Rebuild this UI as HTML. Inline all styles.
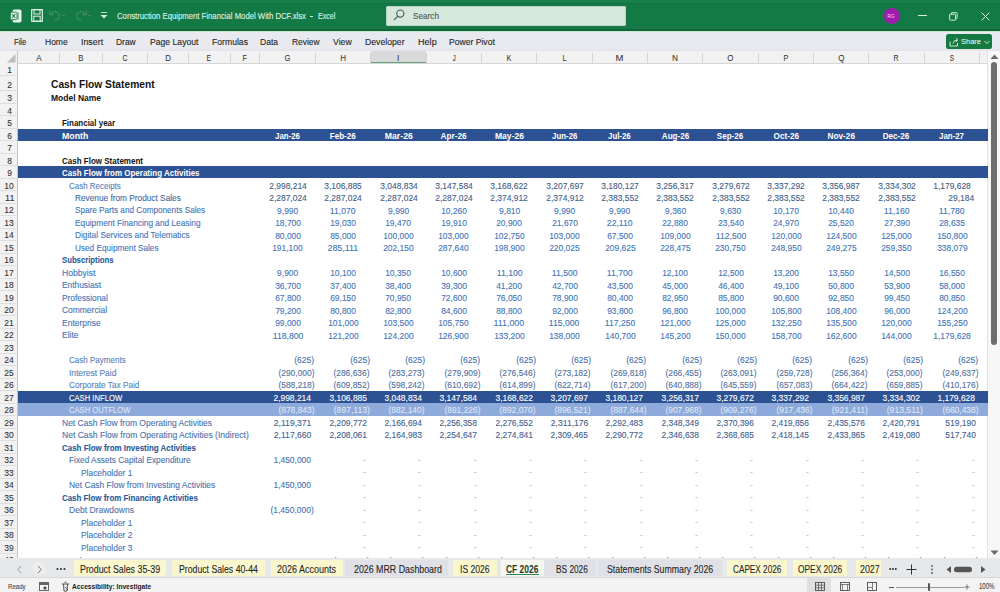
<!DOCTYPE html><html><head><meta charset="utf-8"><title>Cash Flow Statement</title><style>
*{margin:0;padding:0;box-sizing:border-box}
html,body{width:1000px;height:592px;overflow:hidden;background:#fff;font-family:"Liberation Sans", sans-serif}
.a{position:absolute}
.t{position:absolute;white-space:nowrap;line-height:0}
#sheet{position:absolute;left:0;top:0;width:1000px;height:558.3px;overflow:hidden}
</style></head><body>
<div id="sheet">
<div class="a" style="left:0px;top:51.3px;width:987.5px;height:12.1px;background:#f2f2f2;"></div>
<div class="a" style="left:0px;top:62.6px;width:987.5px;height:0.8px;background:#d6d6d6;"></div>
<div class="a" style="left:0px;top:63.4px;width:17.5px;height:494.9px;background:#f2f2f2;"></div>
<div class="a" style="left:16.7px;top:51.3px;width:0.8px;height:507px;background:#c6c6c6;"></div>
<div class="a" style="left:370.7px;top:51.3px;width:55.35px;height:12.1px;background:#d9d9d9;"></div>
<div class="a" style="left:370.7px;top:61.8px;width:55.35px;height:1.6px;background:#63a27a;"></div>
<div class="a" style="left:59px;top:52.8px;width:0.9px;height:10.1px;background:#d4d4d4;"></div>
<div class="t" style="left:35.65px;top:57.94px;font-size:8.56px;color:#333;-webkit-text-stroke:0.05px #333;transform:scaleX(0.9429);transform-origin:center;">A</div>
<div class="a" style="left:101.5px;top:52.8px;width:0.9px;height:10.1px;background:#d4d4d4;"></div>
<div class="t" style="left:77.9px;top:57.94px;font-size:8.56px;color:#333;-webkit-text-stroke:0.05px #333;transform:scaleX(0.8864);transform-origin:center;">B</div>
<div class="a" style="left:146.75px;top:52.8px;width:0.9px;height:10.1px;background:#d4d4d4;"></div>
<div class="t" style="left:121.54px;top:57.94px;font-size:8.56px;color:#333;-webkit-text-stroke:0.05px #333;transform:scaleX(0.8025);transform-origin:center;">C</div>
<div class="a" style="left:187.6px;top:52.8px;width:0.9px;height:10.1px;background:#d4d4d4;"></div>
<div class="t" style="left:164.59px;top:57.94px;font-size:8.56px;color:#333;-webkit-text-stroke:0.05px #333;transform:scaleX(0.9260);transform-origin:center;">D</div>
<div class="a" style="left:229.5px;top:52.8px;width:0.9px;height:10.1px;background:#d4d4d4;"></div>
<div class="t" style="left:206.2px;top:57.94px;font-size:8.56px;color:#333;-webkit-text-stroke:0.05px #333;transform:scaleX(0.7957);transform-origin:center;">E</div>
<div class="a" style="left:259px;top:52.8px;width:0.9px;height:10.1px;background:#d4d4d4;"></div>
<div class="t" style="left:242.14px;top:57.94px;font-size:8.56px;color:#333;-webkit-text-stroke:0.05px #333;transform:scaleX(0.8176);transform-origin:center;">F</div>
<div class="a" style="left:314.85px;top:52.8px;width:0.9px;height:10.1px;background:#d4d4d4;"></div>
<div class="t" style="left:284.35px;top:57.94px;font-size:8.56px;color:#333;-webkit-text-stroke:0.05px #333;transform:scaleX(0.8816);transform-origin:center;">G</div>
<div class="a" style="left:370.2px;top:52.8px;width:0.9px;height:10.1px;background:#d4d4d4;"></div>
<div class="t" style="left:339.94px;top:57.94px;font-size:8.56px;color:#333;-webkit-text-stroke:0.05px #333;transform:scaleX(0.9378);transform-origin:center;">H</div>
<div class="a" style="left:425.55px;top:52.8px;width:0.9px;height:10.1px;background:#d4d4d4;"></div>
<div class="t" style="left:397.19px;top:57.94px;font-size:8.56px;color:#333;-webkit-text-stroke:0.05px #333;transform:scaleX(0.9857);transform-origin:center;">I</div>
<div class="a" style="left:480.9px;top:52.8px;width:0.9px;height:10.1px;background:#d4d4d4;"></div>
<div class="t" style="left:451.59px;top:57.94px;font-size:8.56px;color:#333;-webkit-text-stroke:0.05px #333;transform:scaleX(0.6931);transform-origin:center;">J</div>
<div class="a" style="left:536.25px;top:52.8px;width:0.9px;height:10.1px;background:#d4d4d4;"></div>
<div class="t" style="left:506.22px;top:57.94px;font-size:8.56px;color:#333;-webkit-text-stroke:0.05px #333;transform:scaleX(0.8466);transform-origin:center;">K</div>
<div class="a" style="left:591.6px;top:52.8px;width:0.9px;height:10.1px;background:#d4d4d4;"></div>
<div class="t" style="left:562.05px;top:57.94px;font-size:8.56px;color:#333;-webkit-text-stroke:0.05px #333;transform:scaleX(0.8216);transform-origin:center;">L</div>
<div class="a" style="left:646.95px;top:52.8px;width:0.9px;height:10.1px;background:#d4d4d4;"></div>
<div class="t" style="left:616.21px;top:57.94px;font-size:8.56px;color:#333;-webkit-text-stroke:0.05px #333;transform:scaleX(1.1156);transform-origin:center;">M</div>
<div class="a" style="left:702.3px;top:52.8px;width:0.9px;height:10.1px;background:#d4d4d4;"></div>
<div class="t" style="left:672.04px;top:57.94px;font-size:8.56px;color:#333;-webkit-text-stroke:0.05px #333;transform:scaleX(0.9716);transform-origin:center;">N</div>
<div class="a" style="left:757.65px;top:52.8px;width:0.9px;height:10.1px;background:#d4d4d4;"></div>
<div class="t" style="left:727.15px;top:57.94px;font-size:8.56px;color:#333;-webkit-text-stroke:0.05px #333;transform:scaleX(0.9252);transform-origin:center;">O</div>
<div class="a" style="left:813px;top:52.8px;width:0.9px;height:10.1px;background:#d4d4d4;"></div>
<div class="t" style="left:782.97px;top:57.94px;font-size:8.56px;color:#333;-webkit-text-stroke:0.05px #333;transform:scaleX(0.8419);transform-origin:center;">P</div>
<div class="a" style="left:868.35px;top:52.8px;width:0.9px;height:10.1px;background:#d4d4d4;"></div>
<div class="t" style="left:837.85px;top:57.94px;font-size:8.56px;color:#333;-webkit-text-stroke:0.05px #333;transform:scaleX(0.9403);transform-origin:center;">Q</div>
<div class="a" style="left:923.7px;top:52.8px;width:0.9px;height:10.1px;background:#d4d4d4;"></div>
<div class="t" style="left:893.44px;top:57.94px;font-size:8.56px;color:#333;-webkit-text-stroke:0.05px #333;transform:scaleX(0.8172);transform-origin:center;">R</div>
<div class="a" style="left:979.05px;top:52.8px;width:0.9px;height:10.1px;background:#d4d4d4;"></div>
<div class="t" style="left:949.02px;top:57.94px;font-size:8.56px;color:#333;-webkit-text-stroke:0.05px #333;transform:scaleX(0.7488);transform-origin:center;">S</div>
<div class="a" style="left:987px;top:51.3px;width:0.8px;height:507px;background:#e2e2e2;"></div>
<svg class="a" style="left:6px;top:53.599999999999994px" width="10" height="9"><polygon points="9.5,0 9.5,8.5 1,8.5" fill="#bdbdbd"/></svg>
<div class="a" style="left:0px;top:74.6px;width:16.7px;height:0.8px;background:#dedede;"></div>
<div class="t" style="left:6.77px;top:70.45px;font-size:9.1px;color:#333;-webkit-text-stroke:0.1px #333;transform:scaleX(0.9314);transform-origin:center;">1</div>
<div class="a" style="left:0px;top:90.1px;width:16.7px;height:0.8px;background:#dedede;"></div>
<div class="t" style="left:6.77px;top:84.75px;font-size:9.1px;color:#333;-webkit-text-stroke:0.1px #333;transform:scaleX(0.9314);transform-origin:center;">2</div>
<div class="a" style="left:0px;top:102.9px;width:16.7px;height:0.8px;background:#dedede;"></div>
<div class="t" style="left:6.77px;top:97.75px;font-size:9.1px;color:#333;-webkit-text-stroke:0.1px #333;transform:scaleX(0.9314);transform-origin:center;">3</div>
<div class="a" style="left:0px;top:115.4px;width:16.7px;height:0.8px;background:#dedede;"></div>
<div class="t" style="left:6.77px;top:110.55px;font-size:9.1px;color:#333;-webkit-text-stroke:0.1px #333;transform:scaleX(0.9314);transform-origin:center;">4</div>
<div class="a" style="left:0px;top:127.9px;width:16.7px;height:0.8px;background:#dedede;"></div>
<div class="t" style="left:6.77px;top:123.05px;font-size:9.1px;color:#333;-webkit-text-stroke:0.1px #333;transform:scaleX(0.9314);transform-origin:center;">5</div>
<div class="a" style="left:0px;top:140.39px;width:16.7px;height:0.8px;background:#dedede;"></div>
<div class="t" style="left:6.77px;top:135.55px;font-size:9.1px;color:#333;-webkit-text-stroke:0.1px #333;transform:scaleX(0.9314);transform-origin:center;">6</div>
<div class="a" style="left:0px;top:152.88px;width:16.7px;height:0.8px;background:#dedede;"></div>
<div class="t" style="left:6.77px;top:148.04px;font-size:9.1px;color:#333;-webkit-text-stroke:0.1px #333;transform:scaleX(0.9314);transform-origin:center;">7</div>
<div class="a" style="left:0px;top:165.37px;width:16.7px;height:0.8px;background:#dedede;"></div>
<div class="t" style="left:6.77px;top:160.53px;font-size:9.1px;color:#333;-webkit-text-stroke:0.1px #333;transform:scaleX(0.9314);transform-origin:center;">8</div>
<div class="a" style="left:0px;top:177.86px;width:16.7px;height:0.8px;background:#dedede;"></div>
<div class="t" style="left:6.77px;top:173.02px;font-size:9.1px;color:#333;-webkit-text-stroke:0.1px #333;transform:scaleX(0.9314);transform-origin:center;">9</div>
<div class="a" style="left:0px;top:190.35px;width:16.7px;height:0.8px;background:#dedede;"></div>
<div class="t" style="left:4.24px;top:185.51px;font-size:9.1px;color:#333;-webkit-text-stroke:0.1px #333;transform:scaleX(0.9314);transform-origin:center;">10</div>
<div class="a" style="left:0px;top:202.84px;width:16.7px;height:0.8px;background:#dedede;"></div>
<div class="t" style="left:4.58px;top:198px;font-size:9.1px;color:#333;-webkit-text-stroke:0.1px #333;transform:scaleX(0.9980);transform-origin:center;">11</div>
<div class="a" style="left:0px;top:215.33px;width:16.7px;height:0.8px;background:#dedede;"></div>
<div class="t" style="left:4.24px;top:210.49px;font-size:9.1px;color:#333;-webkit-text-stroke:0.1px #333;transform:scaleX(0.9314);transform-origin:center;">12</div>
<div class="a" style="left:0px;top:227.82px;width:16.7px;height:0.8px;background:#dedede;"></div>
<div class="t" style="left:4.24px;top:222.98px;font-size:9.1px;color:#333;-webkit-text-stroke:0.1px #333;transform:scaleX(0.9314);transform-origin:center;">13</div>
<div class="a" style="left:0px;top:240.31px;width:16.7px;height:0.8px;background:#dedede;"></div>
<div class="t" style="left:4.24px;top:235.47px;font-size:9.1px;color:#333;-webkit-text-stroke:0.1px #333;transform:scaleX(0.9314);transform-origin:center;">14</div>
<div class="a" style="left:0px;top:252.8px;width:16.7px;height:0.8px;background:#dedede;"></div>
<div class="t" style="left:4.24px;top:247.96px;font-size:9.1px;color:#333;-webkit-text-stroke:0.1px #333;transform:scaleX(0.9314);transform-origin:center;">15</div>
<div class="a" style="left:0px;top:265.29px;width:16.7px;height:0.8px;background:#dedede;"></div>
<div class="t" style="left:4.24px;top:260.45px;font-size:9.1px;color:#333;-webkit-text-stroke:0.1px #333;transform:scaleX(0.9314);transform-origin:center;">16</div>
<div class="a" style="left:0px;top:277.78px;width:16.7px;height:0.8px;background:#dedede;"></div>
<div class="t" style="left:4.24px;top:272.94px;font-size:9.1px;color:#333;-webkit-text-stroke:0.1px #333;transform:scaleX(0.9314);transform-origin:center;">17</div>
<div class="a" style="left:0px;top:290.27px;width:16.7px;height:0.8px;background:#dedede;"></div>
<div class="t" style="left:4.24px;top:285.43px;font-size:9.1px;color:#333;-webkit-text-stroke:0.1px #333;transform:scaleX(0.9314);transform-origin:center;">18</div>
<div class="a" style="left:0px;top:302.76px;width:16.7px;height:0.8px;background:#dedede;"></div>
<div class="t" style="left:4.24px;top:297.92px;font-size:9.1px;color:#333;-webkit-text-stroke:0.1px #333;transform:scaleX(0.9314);transform-origin:center;">19</div>
<div class="a" style="left:0px;top:315.25px;width:16.7px;height:0.8px;background:#dedede;"></div>
<div class="t" style="left:4.24px;top:310.41px;font-size:9.1px;color:#333;-webkit-text-stroke:0.1px #333;transform:scaleX(0.9314);transform-origin:center;">20</div>
<div class="a" style="left:0px;top:327.74px;width:16.7px;height:0.8px;background:#dedede;"></div>
<div class="t" style="left:4.24px;top:322.9px;font-size:9.1px;color:#333;-webkit-text-stroke:0.1px #333;transform:scaleX(0.9314);transform-origin:center;">21</div>
<div class="a" style="left:0px;top:340.23px;width:16.7px;height:0.8px;background:#dedede;"></div>
<div class="t" style="left:4.24px;top:335.39px;font-size:9.1px;color:#333;-webkit-text-stroke:0.1px #333;transform:scaleX(0.9314);transform-origin:center;">22</div>
<div class="a" style="left:0px;top:352.72px;width:16.7px;height:0.8px;background:#dedede;"></div>
<div class="t" style="left:4.24px;top:347.88px;font-size:9.1px;color:#333;-webkit-text-stroke:0.1px #333;transform:scaleX(0.9314);transform-origin:center;">23</div>
<div class="a" style="left:0px;top:365.21px;width:16.7px;height:0.8px;background:#dedede;"></div>
<div class="t" style="left:4.24px;top:360.37px;font-size:9.1px;color:#333;-webkit-text-stroke:0.1px #333;transform:scaleX(0.9314);transform-origin:center;">24</div>
<div class="a" style="left:0px;top:377.7px;width:16.7px;height:0.8px;background:#dedede;"></div>
<div class="t" style="left:4.24px;top:372.86px;font-size:9.1px;color:#333;-webkit-text-stroke:0.1px #333;transform:scaleX(0.9314);transform-origin:center;">25</div>
<div class="a" style="left:0px;top:390.19px;width:16.7px;height:0.8px;background:#dedede;"></div>
<div class="t" style="left:4.24px;top:385.35px;font-size:9.1px;color:#333;-webkit-text-stroke:0.1px #333;transform:scaleX(0.9314);transform-origin:center;">26</div>
<div class="a" style="left:0px;top:402.68px;width:16.7px;height:0.8px;background:#dedede;"></div>
<div class="t" style="left:4.24px;top:397.84px;font-size:9.1px;color:#333;-webkit-text-stroke:0.1px #333;transform:scaleX(0.9314);transform-origin:center;">27</div>
<div class="a" style="left:0px;top:415.17px;width:16.7px;height:0.8px;background:#dedede;"></div>
<div class="t" style="left:4.24px;top:410.33px;font-size:9.1px;color:#333;-webkit-text-stroke:0.1px #333;transform:scaleX(0.9314);transform-origin:center;">28</div>
<div class="a" style="left:0px;top:427.66px;width:16.7px;height:0.8px;background:#dedede;"></div>
<div class="t" style="left:4.24px;top:422.82px;font-size:9.1px;color:#333;-webkit-text-stroke:0.1px #333;transform:scaleX(0.9314);transform-origin:center;">29</div>
<div class="a" style="left:0px;top:440.15px;width:16.7px;height:0.8px;background:#dedede;"></div>
<div class="t" style="left:4.24px;top:435.31px;font-size:9.1px;color:#333;-webkit-text-stroke:0.1px #333;transform:scaleX(0.9314);transform-origin:center;">30</div>
<div class="a" style="left:0px;top:452.64px;width:16.7px;height:0.8px;background:#dedede;"></div>
<div class="t" style="left:4.24px;top:447.8px;font-size:9.1px;color:#333;-webkit-text-stroke:0.1px #333;transform:scaleX(0.9314);transform-origin:center;">31</div>
<div class="a" style="left:0px;top:465.13px;width:16.7px;height:0.8px;background:#dedede;"></div>
<div class="t" style="left:4.24px;top:460.29px;font-size:9.1px;color:#333;-webkit-text-stroke:0.1px #333;transform:scaleX(0.9314);transform-origin:center;">32</div>
<div class="a" style="left:0px;top:477.62px;width:16.7px;height:0.8px;background:#dedede;"></div>
<div class="t" style="left:4.24px;top:472.78px;font-size:9.1px;color:#333;-webkit-text-stroke:0.1px #333;transform:scaleX(0.9314);transform-origin:center;">33</div>
<div class="a" style="left:0px;top:490.11px;width:16.7px;height:0.8px;background:#dedede;"></div>
<div class="t" style="left:4.24px;top:485.27px;font-size:9.1px;color:#333;-webkit-text-stroke:0.1px #333;transform:scaleX(0.9314);transform-origin:center;">34</div>
<div class="a" style="left:0px;top:502.6px;width:16.7px;height:0.8px;background:#dedede;"></div>
<div class="t" style="left:4.24px;top:497.76px;font-size:9.1px;color:#333;-webkit-text-stroke:0.1px #333;transform:scaleX(0.9314);transform-origin:center;">35</div>
<div class="a" style="left:0px;top:515.09px;width:16.7px;height:0.8px;background:#dedede;"></div>
<div class="t" style="left:4.24px;top:510.25px;font-size:9.1px;color:#333;-webkit-text-stroke:0.1px #333;transform:scaleX(0.9314);transform-origin:center;">36</div>
<div class="a" style="left:0px;top:527.58px;width:16.7px;height:0.8px;background:#dedede;"></div>
<div class="t" style="left:4.24px;top:522.74px;font-size:9.1px;color:#333;-webkit-text-stroke:0.1px #333;transform:scaleX(0.9314);transform-origin:center;">37</div>
<div class="a" style="left:0px;top:540.07px;width:16.7px;height:0.8px;background:#dedede;"></div>
<div class="t" style="left:4.24px;top:535.23px;font-size:9.1px;color:#333;-webkit-text-stroke:0.1px #333;transform:scaleX(0.9314);transform-origin:center;">38</div>
<div class="a" style="left:0px;top:552.56px;width:16.7px;height:0.8px;background:#dedede;"></div>
<div class="t" style="left:4.24px;top:547.72px;font-size:9.1px;color:#333;-webkit-text-stroke:0.1px #333;transform:scaleX(0.9314);transform-origin:center;">39</div>
<div class="a" style="left:0px;top:565.05px;width:16.7px;height:0.8px;background:#dedede;"></div>
<div class="t" style="left:4.24px;top:560.21px;font-size:9.1px;color:#333;-webkit-text-stroke:0.1px #333;transform:scaleX(0.9314);transform-origin:center;">40</div>
<div class="a" style="left:0px;top:577.54px;width:16.7px;height:0.8px;background:#dedede;"></div>
<div class="t" style="left:4.24px;top:572.7px;font-size:9.1px;color:#333;-webkit-text-stroke:0.1px #333;transform:scaleX(0.9314);transform-origin:center;">41</div>
<div class="a" style="left:17.5px;top:128.5px;width:970px;height:12.49px;background:#2d5294;"></div>
<div class="a" style="left:17.5px;top:165.97px;width:970px;height:12.49px;background:#2d5294;"></div>
<div class="a" style="left:17.5px;top:390.79px;width:970px;height:12.49px;background:#2d5294;"></div>
<div class="a" style="left:17.5px;top:403.28px;width:970px;height:12.49px;background:#8eaadb;"></div>
<div class="t" style="left:51px;top:84.01px;font-size:10.95px;color:#141414;font-weight:bold;transform:scaleX(0.9371);transform-origin:left;">Cash Flow Statement</div>
<div class="t" style="left:51px;top:97.64px;font-size:8.56px;color:#141414;font-weight:bold;transform:scaleX(0.9951);transform-origin:left;">Model Name</div>
<div class="t" style="left:62.4px;top:123.04px;font-size:8.56px;color:#141414;font-weight:bold;transform:scaleX(0.9315);transform-origin:left;">Financial year</div>
<div class="t" style="left:62.4px;top:135.54px;font-size:8.56px;color:#fff;font-weight:bold;transform:scaleX(1.0231);transform-origin:left;">Month</div>
<div class="t" style="left:274.12px;top:135.54px;font-size:8.56px;color:#fff;font-weight:bold;transform:scaleX(0.9198);transform-origin:center;">Jan-26</div>
<div class="t" style="left:329.24px;top:135.54px;font-size:8.56px;color:#fff;font-weight:bold;transform:scaleX(0.9457);transform-origin:center;">Feb-26</div>
<div class="t" style="left:384.58px;top:135.54px;font-size:8.56px;color:#fff;font-weight:bold;transform:scaleX(1.0195);transform-origin:center;">Mar-26</div>
<div class="t" style="left:440.17px;top:135.54px;font-size:8.56px;color:#fff;font-weight:bold;transform:scaleX(0.9603);transform-origin:center;">Apr-26</div>
<div class="t" style="left:494.57px;top:135.54px;font-size:8.56px;color:#fff;font-weight:bold;transform:scaleX(1.0021);transform-origin:center;">May-26</div>
<div class="t" style="left:550.64px;top:135.54px;font-size:8.56px;color:#fff;font-weight:bold;transform:scaleX(0.9187);transform-origin:center;">Jun-26</div>
<div class="t" style="left:607.41px;top:135.54px;font-size:8.56px;color:#fff;font-weight:bold;transform:scaleX(0.9151);transform-origin:center;">Jul-26</div>
<div class="t" style="left:660.63px;top:135.54px;font-size:8.56px;color:#fff;font-weight:bold;transform:scaleX(0.9418);transform-origin:center;">Aug-26</div>
<div class="t" style="left:716.45px;top:135.54px;font-size:8.56px;color:#fff;font-weight:bold;transform:scaleX(0.9389);transform-origin:center;">Sep-26</div>
<div class="t" style="left:772.51px;top:135.54px;font-size:8.56px;color:#fff;font-weight:bold;transform:scaleX(0.9558);transform-origin:center;">Oct-26</div>
<div class="t" style="left:826.91px;top:135.54px;font-size:8.56px;color:#fff;font-weight:bold;transform:scaleX(0.9669);transform-origin:center;">Nov-26</div>
<div class="t" style="left:882.49px;top:135.54px;font-size:8.56px;color:#fff;font-weight:bold;transform:scaleX(0.9518);transform-origin:center;">Dec-26</div>
<div class="t" style="left:938.32px;top:135.54px;font-size:8.56px;color:#fff;font-weight:bold;transform:scaleX(0.9198);transform-origin:center;">Jan-27</div>
<div class="t" style="left:62.4px;top:160.52px;font-size:8.56px;color:#141414;font-weight:bold;transform:scaleX(0.9371);transform-origin:left;">Cash Flow Statement</div>
<div class="t" style="left:62.4px;top:173.01px;font-size:8.56px;color:#fff;font-weight:bold;transform:scaleX(0.9363);transform-origin:left;">Cash Flow from Operating Activities</div>
<div class="t" style="left:68.8px;top:185.5px;font-size:8.56px;color:#5582bd;-webkit-text-stroke:0.1px #5582bd;transform:scaleX(0.9318);transform-origin:left;">Cash Receipts</div>
<div class="t" style="left:268.84px;top:185.7px;font-size:8.56px;color:#3f5b88;-webkit-text-stroke:0.1px #3f5b88;transform:scaleX(0.9888);transform-origin:center;">2,998,214</div>
<div class="t" style="left:324.19px;top:185.7px;font-size:8.56px;color:#3f5b88;-webkit-text-stroke:0.1px #3f5b88;transform:scaleX(0.9888);transform-origin:center;">3,106,885</div>
<div class="t" style="left:379.54px;top:185.7px;font-size:8.56px;color:#3f5b88;-webkit-text-stroke:0.1px #3f5b88;transform:scaleX(0.9888);transform-origin:center;">3,048,834</div>
<div class="t" style="left:434.89px;top:185.7px;font-size:8.56px;color:#3f5b88;-webkit-text-stroke:0.1px #3f5b88;transform:scaleX(0.9888);transform-origin:center;">3,147,584</div>
<div class="t" style="left:490.24px;top:185.7px;font-size:8.56px;color:#3f5b88;-webkit-text-stroke:0.1px #3f5b88;transform:scaleX(0.9888);transform-origin:center;">3,168,622</div>
<div class="t" style="left:545.59px;top:185.7px;font-size:8.56px;color:#3f5b88;-webkit-text-stroke:0.1px #3f5b88;transform:scaleX(0.9888);transform-origin:center;">3,207,697</div>
<div class="t" style="left:600.94px;top:185.7px;font-size:8.56px;color:#3f5b88;-webkit-text-stroke:0.1px #3f5b88;transform:scaleX(0.9888);transform-origin:center;">3,180,127</div>
<div class="t" style="left:656.29px;top:185.7px;font-size:8.56px;color:#3f5b88;-webkit-text-stroke:0.1px #3f5b88;transform:scaleX(0.9888);transform-origin:center;">3,256,317</div>
<div class="t" style="left:711.64px;top:185.7px;font-size:8.56px;color:#3f5b88;-webkit-text-stroke:0.1px #3f5b88;transform:scaleX(0.9888);transform-origin:center;">3,279,672</div>
<div class="t" style="left:766.99px;top:185.7px;font-size:8.56px;color:#3f5b88;-webkit-text-stroke:0.1px #3f5b88;transform:scaleX(0.9888);transform-origin:center;">3,337,292</div>
<div class="t" style="left:822.34px;top:185.7px;font-size:8.56px;color:#3f5b88;-webkit-text-stroke:0.1px #3f5b88;transform:scaleX(0.9888);transform-origin:center;">3,356,987</div>
<div class="t" style="left:877.69px;top:185.7px;font-size:8.56px;color:#3f5b88;-webkit-text-stroke:0.1px #3f5b88;transform:scaleX(0.9888);transform-origin:center;">3,334,302</div>
<div class="t" style="left:933.04px;top:185.7px;font-size:8.56px;color:#3f5b88;-webkit-text-stroke:0.1px #3f5b88;transform:scaleX(0.9888);transform-origin:center;">1,179,628</div>
<div class="t" style="left:74.8px;top:197.99px;font-size:8.56px;color:#3f68a6;-webkit-text-stroke:0.1px #3f68a6;transform:scaleX(0.9684);transform-origin:left;">Revenue from Product Sales</div>
<div class="t" style="left:268.84px;top:198.19px;font-size:8.56px;color:#425d88;-webkit-text-stroke:0.1px #425d88;transform:scaleX(0.9888);transform-origin:center;">2,287,024</div>
<div class="t" style="left:324.19px;top:198.19px;font-size:8.56px;color:#425d88;-webkit-text-stroke:0.1px #425d88;transform:scaleX(0.9888);transform-origin:center;">2,287,024</div>
<div class="t" style="left:379.54px;top:198.19px;font-size:8.56px;color:#425d88;-webkit-text-stroke:0.1px #425d88;transform:scaleX(0.9888);transform-origin:center;">2,287,024</div>
<div class="t" style="left:434.89px;top:198.19px;font-size:8.56px;color:#425d88;-webkit-text-stroke:0.1px #425d88;transform:scaleX(0.9888);transform-origin:center;">2,287,024</div>
<div class="t" style="left:490.24px;top:198.19px;font-size:8.56px;color:#425d88;-webkit-text-stroke:0.1px #425d88;transform:scaleX(0.9888);transform-origin:center;">2,374,912</div>
<div class="t" style="left:545.59px;top:198.19px;font-size:8.56px;color:#425d88;-webkit-text-stroke:0.1px #425d88;transform:scaleX(0.9888);transform-origin:center;">2,374,912</div>
<div class="t" style="left:600.94px;top:198.19px;font-size:8.56px;color:#425d88;-webkit-text-stroke:0.1px #425d88;transform:scaleX(0.9888);transform-origin:center;">2,383,552</div>
<div class="t" style="left:656.29px;top:198.19px;font-size:8.56px;color:#425d88;-webkit-text-stroke:0.1px #425d88;transform:scaleX(0.9888);transform-origin:center;">2,383,552</div>
<div class="t" style="left:711.64px;top:198.19px;font-size:8.56px;color:#425d88;-webkit-text-stroke:0.1px #425d88;transform:scaleX(0.9888);transform-origin:center;">2,383,552</div>
<div class="t" style="left:766.99px;top:198.19px;font-size:8.56px;color:#425d88;-webkit-text-stroke:0.1px #425d88;transform:scaleX(0.9888);transform-origin:center;">2,383,552</div>
<div class="t" style="left:822.34px;top:198.19px;font-size:8.56px;color:#425d88;-webkit-text-stroke:0.1px #425d88;transform:scaleX(0.9888);transform-origin:center;">2,383,552</div>
<div class="t" style="left:877.69px;top:198.19px;font-size:8.56px;color:#425d88;-webkit-text-stroke:0.1px #425d88;transform:scaleX(0.9888);transform-origin:center;">2,383,552</div>
<div class="t" style="left:948.38px;top:197.99px;font-size:8.56px;color:#425d88;-webkit-text-stroke:0.1px #425d88;transform:scaleX(0.9893);transform-origin:right;">29,184</div>
<div class="t" style="left:74.8px;top:210.48px;font-size:8.56px;color:#4274b8;-webkit-text-stroke:0.1px #4274b8;transform:scaleX(0.9548);transform-origin:left;">Spare Parts and Components Sales</div>
<div class="t" style="left:277.17px;top:210.68px;font-size:8.56px;color:#4274b8;-webkit-text-stroke:0.1px #4274b8;transform:scaleX(0.9890);transform-origin:center;">9,990</div>
<div class="t" style="left:330.46px;top:210.68px;font-size:8.56px;color:#4274b8;-webkit-text-stroke:0.1px #4274b8;transform:scaleX(1.0139);transform-origin:center;">11,070</div>
<div class="t" style="left:387.87px;top:210.68px;font-size:8.56px;color:#4274b8;-webkit-text-stroke:0.1px #4274b8;transform:scaleX(0.9890);transform-origin:center;">9,990</div>
<div class="t" style="left:440.84px;top:210.68px;font-size:8.56px;color:#4274b8;-webkit-text-stroke:0.1px #4274b8;transform:scaleX(0.9893);transform-origin:center;">10,260</div>
<div class="t" style="left:498.57px;top:210.68px;font-size:8.56px;color:#4274b8;-webkit-text-stroke:0.1px #4274b8;transform:scaleX(0.9890);transform-origin:center;">9,810</div>
<div class="t" style="left:553.92px;top:210.68px;font-size:8.56px;color:#4274b8;-webkit-text-stroke:0.1px #4274b8;transform:scaleX(0.9890);transform-origin:center;">9,990</div>
<div class="t" style="left:609.27px;top:210.68px;font-size:8.56px;color:#4274b8;-webkit-text-stroke:0.1px #4274b8;transform:scaleX(0.9890);transform-origin:center;">9,990</div>
<div class="t" style="left:664.62px;top:210.68px;font-size:8.56px;color:#4274b8;-webkit-text-stroke:0.1px #4274b8;transform:scaleX(0.9890);transform-origin:center;">9,360</div>
<div class="t" style="left:719.97px;top:210.68px;font-size:8.56px;color:#4274b8;-webkit-text-stroke:0.1px #4274b8;transform:scaleX(0.9890);transform-origin:center;">9,630</div>
<div class="t" style="left:772.94px;top:210.68px;font-size:8.56px;color:#4274b8;-webkit-text-stroke:0.1px #4274b8;transform:scaleX(0.9893);transform-origin:center;">10,170</div>
<div class="t" style="left:828.29px;top:210.68px;font-size:8.56px;color:#4274b8;-webkit-text-stroke:0.1px #4274b8;transform:scaleX(0.9893);transform-origin:center;">10,440</div>
<div class="t" style="left:883.96px;top:210.68px;font-size:8.56px;color:#4274b8;-webkit-text-stroke:0.1px #4274b8;transform:scaleX(1.0139);transform-origin:center;">11,160</div>
<div class="t" style="left:939.31px;top:210.68px;font-size:8.56px;color:#4274b8;-webkit-text-stroke:0.1px #4274b8;transform:scaleX(1.0139);transform-origin:center;">11,780</div>
<div class="t" style="left:74.8px;top:222.97px;font-size:8.56px;color:#4274b8;-webkit-text-stroke:0.1px #4274b8;transform:scaleX(0.9715);transform-origin:left;">Equipment Financing and Leasing</div>
<div class="t" style="left:274.79px;top:223.17px;font-size:8.56px;color:#4274b8;-webkit-text-stroke:0.1px #4274b8;transform:scaleX(0.9893);transform-origin:center;">18,700</div>
<div class="t" style="left:330.14px;top:223.17px;font-size:8.56px;color:#4274b8;-webkit-text-stroke:0.1px #4274b8;transform:scaleX(0.9893);transform-origin:center;">19,030</div>
<div class="t" style="left:385.49px;top:223.17px;font-size:8.56px;color:#4274b8;-webkit-text-stroke:0.1px #4274b8;transform:scaleX(0.9893);transform-origin:center;">19,470</div>
<div class="t" style="left:440.84px;top:223.17px;font-size:8.56px;color:#4274b8;-webkit-text-stroke:0.1px #4274b8;transform:scaleX(0.9893);transform-origin:center;">19,910</div>
<div class="t" style="left:496.19px;top:223.17px;font-size:8.56px;color:#4274b8;-webkit-text-stroke:0.1px #4274b8;transform:scaleX(0.9893);transform-origin:center;">20,900</div>
<div class="t" style="left:551.54px;top:223.17px;font-size:8.56px;color:#4274b8;-webkit-text-stroke:0.1px #4274b8;transform:scaleX(0.9893);transform-origin:center;">21,670</div>
<div class="t" style="left:607.21px;top:223.17px;font-size:8.56px;color:#4274b8;-webkit-text-stroke:0.1px #4274b8;transform:scaleX(1.0139);transform-origin:center;">22,110</div>
<div class="t" style="left:662.24px;top:223.17px;font-size:8.56px;color:#4274b8;-webkit-text-stroke:0.1px #4274b8;transform:scaleX(0.9893);transform-origin:center;">22,880</div>
<div class="t" style="left:717.59px;top:223.17px;font-size:8.56px;color:#4274b8;-webkit-text-stroke:0.1px #4274b8;transform:scaleX(0.9893);transform-origin:center;">23,540</div>
<div class="t" style="left:772.94px;top:223.17px;font-size:8.56px;color:#4274b8;-webkit-text-stroke:0.1px #4274b8;transform:scaleX(0.9893);transform-origin:center;">24,970</div>
<div class="t" style="left:828.29px;top:223.17px;font-size:8.56px;color:#4274b8;-webkit-text-stroke:0.1px #4274b8;transform:scaleX(0.9893);transform-origin:center;">25,520</div>
<div class="t" style="left:883.64px;top:223.17px;font-size:8.56px;color:#4274b8;-webkit-text-stroke:0.1px #4274b8;transform:scaleX(0.9893);transform-origin:center;">27,390</div>
<div class="t" style="left:938.99px;top:223.17px;font-size:8.56px;color:#4274b8;-webkit-text-stroke:0.1px #4274b8;transform:scaleX(0.9893);transform-origin:center;">28,635</div>
<div class="t" style="left:74.8px;top:235.46px;font-size:8.56px;color:#4274b8;-webkit-text-stroke:0.1px #4274b8;transform:scaleX(0.9716);transform-origin:left;">Digital Services and Telematics</div>
<div class="t" style="left:274.79px;top:235.66px;font-size:8.56px;color:#4274b8;-webkit-text-stroke:0.1px #4274b8;transform:scaleX(0.9893);transform-origin:center;">80,000</div>
<div class="t" style="left:330.14px;top:235.66px;font-size:8.56px;color:#4274b8;-webkit-text-stroke:0.1px #4274b8;transform:scaleX(0.9893);transform-origin:center;">85,000</div>
<div class="t" style="left:383.11px;top:235.66px;font-size:8.56px;color:#4274b8;-webkit-text-stroke:0.1px #4274b8;transform:scaleX(0.9895);transform-origin:center;">100,000</div>
<div class="t" style="left:438.46px;top:235.66px;font-size:8.56px;color:#4274b8;-webkit-text-stroke:0.1px #4274b8;transform:scaleX(0.9895);transform-origin:center;">103,000</div>
<div class="t" style="left:493.81px;top:235.66px;font-size:8.56px;color:#4274b8;-webkit-text-stroke:0.1px #4274b8;transform:scaleX(0.9895);transform-origin:center;">102,750</div>
<div class="t" style="left:549.16px;top:235.66px;font-size:8.56px;color:#4274b8;-webkit-text-stroke:0.1px #4274b8;transform:scaleX(0.9895);transform-origin:center;">103,000</div>
<div class="t" style="left:606.89px;top:235.66px;font-size:8.56px;color:#4274b8;-webkit-text-stroke:0.1px #4274b8;transform:scaleX(0.9893);transform-origin:center;">67,500</div>
<div class="t" style="left:659.86px;top:235.66px;font-size:8.56px;color:#4274b8;-webkit-text-stroke:0.1px #4274b8;transform:scaleX(0.9895);transform-origin:center;">109,000</div>
<div class="t" style="left:715.53px;top:235.66px;font-size:8.56px;color:#4274b8;-webkit-text-stroke:0.1px #4274b8;transform:scaleX(1.0102);transform-origin:center;">112,500</div>
<div class="t" style="left:770.56px;top:235.66px;font-size:8.56px;color:#4274b8;-webkit-text-stroke:0.1px #4274b8;transform:scaleX(0.9895);transform-origin:center;">120,000</div>
<div class="t" style="left:825.91px;top:235.66px;font-size:8.56px;color:#4274b8;-webkit-text-stroke:0.1px #4274b8;transform:scaleX(0.9895);transform-origin:center;">124,500</div>
<div class="t" style="left:881.26px;top:235.66px;font-size:8.56px;color:#4274b8;-webkit-text-stroke:0.1px #4274b8;transform:scaleX(0.9895);transform-origin:center;">125,000</div>
<div class="t" style="left:936.61px;top:235.66px;font-size:8.56px;color:#4274b8;-webkit-text-stroke:0.1px #4274b8;transform:scaleX(0.9895);transform-origin:center;">150,800</div>
<div class="t" style="left:74.8px;top:247.95px;font-size:8.56px;color:#4274b8;-webkit-text-stroke:0.1px #4274b8;transform:scaleX(0.9607);transform-origin:left;">Used Equipment Sales</div>
<div class="t" style="left:272.41px;top:248.15px;font-size:8.56px;color:#4274b8;-webkit-text-stroke:0.1px #4274b8;transform:scaleX(0.9895);transform-origin:center;">191,100</div>
<div class="t" style="left:328.4px;top:248.15px;font-size:8.56px;color:#4274b8;-webkit-text-stroke:0.1px #4274b8;transform:scaleX(1.0318);transform-origin:center;">285,111</div>
<div class="t" style="left:383.11px;top:248.15px;font-size:8.56px;color:#4274b8;-webkit-text-stroke:0.1px #4274b8;transform:scaleX(0.9895);transform-origin:center;">202,150</div>
<div class="t" style="left:438.46px;top:248.15px;font-size:8.56px;color:#4274b8;-webkit-text-stroke:0.1px #4274b8;transform:scaleX(0.9895);transform-origin:center;">287,640</div>
<div class="t" style="left:493.81px;top:248.15px;font-size:8.56px;color:#4274b8;-webkit-text-stroke:0.1px #4274b8;transform:scaleX(0.9895);transform-origin:center;">198,900</div>
<div class="t" style="left:549.16px;top:248.15px;font-size:8.56px;color:#4274b8;-webkit-text-stroke:0.1px #4274b8;transform:scaleX(0.9895);transform-origin:center;">220,025</div>
<div class="t" style="left:604.51px;top:248.15px;font-size:8.56px;color:#4274b8;-webkit-text-stroke:0.1px #4274b8;transform:scaleX(0.9895);transform-origin:center;">209,625</div>
<div class="t" style="left:659.86px;top:248.15px;font-size:8.56px;color:#4274b8;-webkit-text-stroke:0.1px #4274b8;transform:scaleX(0.9895);transform-origin:center;">228,475</div>
<div class="t" style="left:715.21px;top:248.15px;font-size:8.56px;color:#4274b8;-webkit-text-stroke:0.1px #4274b8;transform:scaleX(0.9895);transform-origin:center;">230,750</div>
<div class="t" style="left:770.56px;top:248.15px;font-size:8.56px;color:#4274b8;-webkit-text-stroke:0.1px #4274b8;transform:scaleX(0.9895);transform-origin:center;">248,950</div>
<div class="t" style="left:825.91px;top:248.15px;font-size:8.56px;color:#4274b8;-webkit-text-stroke:0.1px #4274b8;transform:scaleX(0.9895);transform-origin:center;">249,275</div>
<div class="t" style="left:881.26px;top:248.15px;font-size:8.56px;color:#4274b8;-webkit-text-stroke:0.1px #4274b8;transform:scaleX(0.9895);transform-origin:center;">259,350</div>
<div class="t" style="left:936.61px;top:248.15px;font-size:8.56px;color:#4274b8;-webkit-text-stroke:0.1px #4274b8;transform:scaleX(0.9895);transform-origin:center;">338,079</div>
<div class="t" style="left:62.4px;top:260.44px;font-size:8.56px;color:#2b5c9a;font-weight:bold;-webkit-text-stroke:0.1px #2b5c9a;transform:scaleX(0.9049);transform-origin:left;">Subscriptions</div>
<div class="t" style="left:62.4px;top:272.93px;font-size:8.56px;color:#4274b8;-webkit-text-stroke:0.1px #4274b8;transform:scaleX(1.0039);transform-origin:left;">Hobbyist</div>
<div class="t" style="left:277.17px;top:273.13px;font-size:8.56px;color:#4274b8;-webkit-text-stroke:0.1px #4274b8;transform:scaleX(0.9890);transform-origin:center;">9,900</div>
<div class="t" style="left:330.14px;top:273.13px;font-size:8.56px;color:#4274b8;-webkit-text-stroke:0.1px #4274b8;transform:scaleX(0.9893);transform-origin:center;">10,100</div>
<div class="t" style="left:385.49px;top:273.13px;font-size:8.56px;color:#4274b8;-webkit-text-stroke:0.1px #4274b8;transform:scaleX(0.9893);transform-origin:center;">10,350</div>
<div class="t" style="left:440.84px;top:273.13px;font-size:8.56px;color:#4274b8;-webkit-text-stroke:0.1px #4274b8;transform:scaleX(0.9893);transform-origin:center;">10,600</div>
<div class="t" style="left:496.51px;top:273.13px;font-size:8.56px;color:#4274b8;-webkit-text-stroke:0.1px #4274b8;transform:scaleX(1.0139);transform-origin:center;">11,100</div>
<div class="t" style="left:551.86px;top:273.13px;font-size:8.56px;color:#4274b8;-webkit-text-stroke:0.1px #4274b8;transform:scaleX(1.0139);transform-origin:center;">11,500</div>
<div class="t" style="left:607.21px;top:273.13px;font-size:8.56px;color:#4274b8;-webkit-text-stroke:0.1px #4274b8;transform:scaleX(1.0139);transform-origin:center;">11,700</div>
<div class="t" style="left:662.24px;top:273.13px;font-size:8.56px;color:#4274b8;-webkit-text-stroke:0.1px #4274b8;transform:scaleX(0.9893);transform-origin:center;">12,100</div>
<div class="t" style="left:717.59px;top:273.13px;font-size:8.56px;color:#4274b8;-webkit-text-stroke:0.1px #4274b8;transform:scaleX(0.9893);transform-origin:center;">12,500</div>
<div class="t" style="left:772.94px;top:273.13px;font-size:8.56px;color:#4274b8;-webkit-text-stroke:0.1px #4274b8;transform:scaleX(0.9893);transform-origin:center;">13,200</div>
<div class="t" style="left:828.29px;top:273.13px;font-size:8.56px;color:#4274b8;-webkit-text-stroke:0.1px #4274b8;transform:scaleX(0.9893);transform-origin:center;">13,550</div>
<div class="t" style="left:883.64px;top:273.13px;font-size:8.56px;color:#4274b8;-webkit-text-stroke:0.1px #4274b8;transform:scaleX(0.9893);transform-origin:center;">14,500</div>
<div class="t" style="left:938.99px;top:273.13px;font-size:8.56px;color:#4274b8;-webkit-text-stroke:0.1px #4274b8;transform:scaleX(0.9893);transform-origin:center;">16,550</div>
<div class="t" style="left:62.4px;top:285.42px;font-size:8.56px;color:#4274b8;-webkit-text-stroke:0.1px #4274b8;transform:scaleX(0.9787);transform-origin:left;">Enthusiast</div>
<div class="t" style="left:274.79px;top:285.62px;font-size:8.56px;color:#4274b8;-webkit-text-stroke:0.1px #4274b8;transform:scaleX(0.9893);transform-origin:center;">36,700</div>
<div class="t" style="left:330.14px;top:285.62px;font-size:8.56px;color:#4274b8;-webkit-text-stroke:0.1px #4274b8;transform:scaleX(0.9893);transform-origin:center;">37,400</div>
<div class="t" style="left:385.49px;top:285.62px;font-size:8.56px;color:#4274b8;-webkit-text-stroke:0.1px #4274b8;transform:scaleX(0.9893);transform-origin:center;">38,400</div>
<div class="t" style="left:440.84px;top:285.62px;font-size:8.56px;color:#4274b8;-webkit-text-stroke:0.1px #4274b8;transform:scaleX(0.9893);transform-origin:center;">39,300</div>
<div class="t" style="left:496.19px;top:285.62px;font-size:8.56px;color:#4274b8;-webkit-text-stroke:0.1px #4274b8;transform:scaleX(0.9893);transform-origin:center;">41,200</div>
<div class="t" style="left:551.54px;top:285.62px;font-size:8.56px;color:#4274b8;-webkit-text-stroke:0.1px #4274b8;transform:scaleX(0.9893);transform-origin:center;">42,700</div>
<div class="t" style="left:606.89px;top:285.62px;font-size:8.56px;color:#4274b8;-webkit-text-stroke:0.1px #4274b8;transform:scaleX(0.9893);transform-origin:center;">43,500</div>
<div class="t" style="left:662.24px;top:285.62px;font-size:8.56px;color:#4274b8;-webkit-text-stroke:0.1px #4274b8;transform:scaleX(0.9893);transform-origin:center;">45,000</div>
<div class="t" style="left:717.59px;top:285.62px;font-size:8.56px;color:#4274b8;-webkit-text-stroke:0.1px #4274b8;transform:scaleX(0.9893);transform-origin:center;">46,400</div>
<div class="t" style="left:772.94px;top:285.62px;font-size:8.56px;color:#4274b8;-webkit-text-stroke:0.1px #4274b8;transform:scaleX(0.9893);transform-origin:center;">49,100</div>
<div class="t" style="left:828.29px;top:285.62px;font-size:8.56px;color:#4274b8;-webkit-text-stroke:0.1px #4274b8;transform:scaleX(0.9893);transform-origin:center;">50,800</div>
<div class="t" style="left:883.64px;top:285.62px;font-size:8.56px;color:#4274b8;-webkit-text-stroke:0.1px #4274b8;transform:scaleX(0.9893);transform-origin:center;">53,900</div>
<div class="t" style="left:938.99px;top:285.62px;font-size:8.56px;color:#4274b8;-webkit-text-stroke:0.1px #4274b8;transform:scaleX(0.9893);transform-origin:center;">58,000</div>
<div class="t" style="left:62.4px;top:297.91px;font-size:8.56px;color:#4274b8;-webkit-text-stroke:0.1px #4274b8;transform:scaleX(0.9732);transform-origin:left;">Professional</div>
<div class="t" style="left:274.79px;top:298.11px;font-size:8.56px;color:#4274b8;-webkit-text-stroke:0.1px #4274b8;transform:scaleX(0.9893);transform-origin:center;">67,800</div>
<div class="t" style="left:330.14px;top:298.11px;font-size:8.56px;color:#4274b8;-webkit-text-stroke:0.1px #4274b8;transform:scaleX(0.9893);transform-origin:center;">69,150</div>
<div class="t" style="left:385.49px;top:298.11px;font-size:8.56px;color:#4274b8;-webkit-text-stroke:0.1px #4274b8;transform:scaleX(0.9893);transform-origin:center;">70,950</div>
<div class="t" style="left:440.84px;top:298.11px;font-size:8.56px;color:#4274b8;-webkit-text-stroke:0.1px #4274b8;transform:scaleX(0.9893);transform-origin:center;">72,600</div>
<div class="t" style="left:496.19px;top:298.11px;font-size:8.56px;color:#4274b8;-webkit-text-stroke:0.1px #4274b8;transform:scaleX(0.9893);transform-origin:center;">76,050</div>
<div class="t" style="left:551.54px;top:298.11px;font-size:8.56px;color:#4274b8;-webkit-text-stroke:0.1px #4274b8;transform:scaleX(0.9893);transform-origin:center;">78,900</div>
<div class="t" style="left:606.89px;top:298.11px;font-size:8.56px;color:#4274b8;-webkit-text-stroke:0.1px #4274b8;transform:scaleX(0.9893);transform-origin:center;">80,400</div>
<div class="t" style="left:662.24px;top:298.11px;font-size:8.56px;color:#4274b8;-webkit-text-stroke:0.1px #4274b8;transform:scaleX(0.9893);transform-origin:center;">82,950</div>
<div class="t" style="left:717.59px;top:298.11px;font-size:8.56px;color:#4274b8;-webkit-text-stroke:0.1px #4274b8;transform:scaleX(0.9893);transform-origin:center;">85,800</div>
<div class="t" style="left:772.94px;top:298.11px;font-size:8.56px;color:#4274b8;-webkit-text-stroke:0.1px #4274b8;transform:scaleX(0.9893);transform-origin:center;">90,600</div>
<div class="t" style="left:828.29px;top:298.11px;font-size:8.56px;color:#4274b8;-webkit-text-stroke:0.1px #4274b8;transform:scaleX(0.9893);transform-origin:center;">92,850</div>
<div class="t" style="left:883.64px;top:298.11px;font-size:8.56px;color:#4274b8;-webkit-text-stroke:0.1px #4274b8;transform:scaleX(0.9893);transform-origin:center;">99,450</div>
<div class="t" style="left:938.99px;top:298.11px;font-size:8.56px;color:#4274b8;-webkit-text-stroke:0.1px #4274b8;transform:scaleX(0.9893);transform-origin:center;">80,850</div>
<div class="t" style="left:62.4px;top:310.4px;font-size:8.56px;color:#4274b8;-webkit-text-stroke:0.1px #4274b8;transform:scaleX(0.9884);transform-origin:left;">Commercial</div>
<div class="t" style="left:274.79px;top:310.6px;font-size:8.56px;color:#4274b8;-webkit-text-stroke:0.1px #4274b8;transform:scaleX(0.9893);transform-origin:center;">79,200</div>
<div class="t" style="left:330.14px;top:310.6px;font-size:8.56px;color:#4274b8;-webkit-text-stroke:0.1px #4274b8;transform:scaleX(0.9893);transform-origin:center;">80,800</div>
<div class="t" style="left:385.49px;top:310.6px;font-size:8.56px;color:#4274b8;-webkit-text-stroke:0.1px #4274b8;transform:scaleX(0.9893);transform-origin:center;">82,800</div>
<div class="t" style="left:440.84px;top:310.6px;font-size:8.56px;color:#4274b8;-webkit-text-stroke:0.1px #4274b8;transform:scaleX(0.9893);transform-origin:center;">84,600</div>
<div class="t" style="left:496.19px;top:310.6px;font-size:8.56px;color:#4274b8;-webkit-text-stroke:0.1px #4274b8;transform:scaleX(0.9893);transform-origin:center;">88,800</div>
<div class="t" style="left:551.54px;top:310.6px;font-size:8.56px;color:#4274b8;-webkit-text-stroke:0.1px #4274b8;transform:scaleX(0.9893);transform-origin:center;">92,000</div>
<div class="t" style="left:606.89px;top:310.6px;font-size:8.56px;color:#4274b8;-webkit-text-stroke:0.1px #4274b8;transform:scaleX(0.9893);transform-origin:center;">93,800</div>
<div class="t" style="left:662.24px;top:310.6px;font-size:8.56px;color:#4274b8;-webkit-text-stroke:0.1px #4274b8;transform:scaleX(0.9893);transform-origin:center;">96,800</div>
<div class="t" style="left:715.21px;top:310.6px;font-size:8.56px;color:#4274b8;-webkit-text-stroke:0.1px #4274b8;transform:scaleX(0.9895);transform-origin:center;">100,000</div>
<div class="t" style="left:770.56px;top:310.6px;font-size:8.56px;color:#4274b8;-webkit-text-stroke:0.1px #4274b8;transform:scaleX(0.9895);transform-origin:center;">105,800</div>
<div class="t" style="left:825.91px;top:310.6px;font-size:8.56px;color:#4274b8;-webkit-text-stroke:0.1px #4274b8;transform:scaleX(0.9895);transform-origin:center;">108,400</div>
<div class="t" style="left:883.64px;top:310.6px;font-size:8.56px;color:#4274b8;-webkit-text-stroke:0.1px #4274b8;transform:scaleX(0.9893);transform-origin:center;">96,000</div>
<div class="t" style="left:936.61px;top:310.6px;font-size:8.56px;color:#4274b8;-webkit-text-stroke:0.1px #4274b8;transform:scaleX(0.9895);transform-origin:center;">124,200</div>
<div class="t" style="left:62.4px;top:322.89px;font-size:8.56px;color:#4274b8;-webkit-text-stroke:0.1px #4274b8;transform:scaleX(0.9938);transform-origin:left;">Enterprise</div>
<div class="t" style="left:274.79px;top:323.09px;font-size:8.56px;color:#4274b8;-webkit-text-stroke:0.1px #4274b8;transform:scaleX(0.9893);transform-origin:center;">99,000</div>
<div class="t" style="left:327.76px;top:323.09px;font-size:8.56px;color:#4274b8;-webkit-text-stroke:0.1px #4274b8;transform:scaleX(0.9895);transform-origin:center;">101,000</div>
<div class="t" style="left:383.11px;top:323.09px;font-size:8.56px;color:#4274b8;-webkit-text-stroke:0.1px #4274b8;transform:scaleX(0.9895);transform-origin:center;">103,500</div>
<div class="t" style="left:438.46px;top:323.09px;font-size:8.56px;color:#4274b8;-webkit-text-stroke:0.1px #4274b8;transform:scaleX(0.9895);transform-origin:center;">105,750</div>
<div class="t" style="left:494.45px;top:323.09px;font-size:8.56px;color:#4274b8;-webkit-text-stroke:0.1px #4274b8;transform:scaleX(1.0318);transform-origin:center;">111,000</div>
<div class="t" style="left:549.48px;top:323.09px;font-size:8.56px;color:#4274b8;-webkit-text-stroke:0.1px #4274b8;transform:scaleX(1.0102);transform-origin:center;">115,000</div>
<div class="t" style="left:604.83px;top:323.09px;font-size:8.56px;color:#4274b8;-webkit-text-stroke:0.1px #4274b8;transform:scaleX(1.0102);transform-origin:center;">117,250</div>
<div class="t" style="left:659.86px;top:323.09px;font-size:8.56px;color:#4274b8;-webkit-text-stroke:0.1px #4274b8;transform:scaleX(0.9895);transform-origin:center;">121,000</div>
<div class="t" style="left:715.21px;top:323.09px;font-size:8.56px;color:#4274b8;-webkit-text-stroke:0.1px #4274b8;transform:scaleX(0.9895);transform-origin:center;">125,000</div>
<div class="t" style="left:770.56px;top:323.09px;font-size:8.56px;color:#4274b8;-webkit-text-stroke:0.1px #4274b8;transform:scaleX(0.9895);transform-origin:center;">132,250</div>
<div class="t" style="left:825.91px;top:323.09px;font-size:8.56px;color:#4274b8;-webkit-text-stroke:0.1px #4274b8;transform:scaleX(0.9895);transform-origin:center;">135,500</div>
<div class="t" style="left:881.26px;top:323.09px;font-size:8.56px;color:#4274b8;-webkit-text-stroke:0.1px #4274b8;transform:scaleX(0.9895);transform-origin:center;">120,000</div>
<div class="t" style="left:936.61px;top:323.09px;font-size:8.56px;color:#4274b8;-webkit-text-stroke:0.1px #4274b8;transform:scaleX(0.9895);transform-origin:center;">155,250</div>
<div class="t" style="left:62.4px;top:335.38px;font-size:8.56px;color:#4274b8;-webkit-text-stroke:0.1px #4274b8;transform:scaleX(0.9885);transform-origin:left;">Elite</div>
<div class="t" style="left:272.73px;top:335.58px;font-size:8.56px;color:#4274b8;-webkit-text-stroke:0.1px #4274b8;transform:scaleX(1.0102);transform-origin:center;">118,800</div>
<div class="t" style="left:327.76px;top:335.58px;font-size:8.56px;color:#4274b8;-webkit-text-stroke:0.1px #4274b8;transform:scaleX(0.9895);transform-origin:center;">121,200</div>
<div class="t" style="left:383.11px;top:335.58px;font-size:8.56px;color:#4274b8;-webkit-text-stroke:0.1px #4274b8;transform:scaleX(0.9895);transform-origin:center;">124,200</div>
<div class="t" style="left:438.46px;top:335.58px;font-size:8.56px;color:#4274b8;-webkit-text-stroke:0.1px #4274b8;transform:scaleX(0.9895);transform-origin:center;">126,900</div>
<div class="t" style="left:493.81px;top:335.58px;font-size:8.56px;color:#4274b8;-webkit-text-stroke:0.1px #4274b8;transform:scaleX(0.9895);transform-origin:center;">133,200</div>
<div class="t" style="left:549.16px;top:335.58px;font-size:8.56px;color:#4274b8;-webkit-text-stroke:0.1px #4274b8;transform:scaleX(0.9895);transform-origin:center;">138,000</div>
<div class="t" style="left:604.51px;top:335.58px;font-size:8.56px;color:#4274b8;-webkit-text-stroke:0.1px #4274b8;transform:scaleX(0.9895);transform-origin:center;">140,700</div>
<div class="t" style="left:659.86px;top:335.58px;font-size:8.56px;color:#4274b8;-webkit-text-stroke:0.1px #4274b8;transform:scaleX(0.9895);transform-origin:center;">145,200</div>
<div class="t" style="left:715.21px;top:335.58px;font-size:8.56px;color:#4274b8;-webkit-text-stroke:0.1px #4274b8;transform:scaleX(0.9895);transform-origin:center;">150,000</div>
<div class="t" style="left:770.56px;top:335.58px;font-size:8.56px;color:#4274b8;-webkit-text-stroke:0.1px #4274b8;transform:scaleX(0.9895);transform-origin:center;">158,700</div>
<div class="t" style="left:825.91px;top:335.58px;font-size:8.56px;color:#4274b8;-webkit-text-stroke:0.1px #4274b8;transform:scaleX(0.9895);transform-origin:center;">162,600</div>
<div class="t" style="left:881.26px;top:335.58px;font-size:8.56px;color:#4274b8;-webkit-text-stroke:0.1px #4274b8;transform:scaleX(0.9895);transform-origin:center;">144,000</div>
<div class="t" style="left:933.04px;top:335.58px;font-size:8.56px;color:#4274b8;-webkit-text-stroke:0.1px #4274b8;transform:scaleX(0.9888);transform-origin:center;">1,179,628</div>
<div class="t" style="left:68.8px;top:360.36px;font-size:8.56px;color:#5582bd;-webkit-text-stroke:0.1px #5582bd;transform:scaleX(0.9396);transform-origin:left;">Cash Payments</div>
<div class="t" style="left:294.18px;top:360.36px;font-size:8.56px;color:#4670b0;-webkit-text-stroke:0.1px #4670b0;transform:scaleX(0.9903);transform-origin:right;">(625)</div>
<div class="t" style="left:349.53px;top:360.36px;font-size:8.56px;color:#4670b0;-webkit-text-stroke:0.1px #4670b0;transform:scaleX(0.9903);transform-origin:right;">(625)</div>
<div class="t" style="left:404.88px;top:360.36px;font-size:8.56px;color:#4670b0;-webkit-text-stroke:0.1px #4670b0;transform:scaleX(0.9903);transform-origin:right;">(625)</div>
<div class="t" style="left:460.23px;top:360.36px;font-size:8.56px;color:#4670b0;-webkit-text-stroke:0.1px #4670b0;transform:scaleX(0.9903);transform-origin:right;">(625)</div>
<div class="t" style="left:515.58px;top:360.36px;font-size:8.56px;color:#4670b0;-webkit-text-stroke:0.1px #4670b0;transform:scaleX(0.9903);transform-origin:right;">(625)</div>
<div class="t" style="left:570.93px;top:360.36px;font-size:8.56px;color:#4670b0;-webkit-text-stroke:0.1px #4670b0;transform:scaleX(0.9903);transform-origin:right;">(625)</div>
<div class="t" style="left:626.28px;top:360.36px;font-size:8.56px;color:#4670b0;-webkit-text-stroke:0.1px #4670b0;transform:scaleX(0.9903);transform-origin:right;">(625)</div>
<div class="t" style="left:681.63px;top:360.36px;font-size:8.56px;color:#4670b0;-webkit-text-stroke:0.1px #4670b0;transform:scaleX(0.9903);transform-origin:right;">(625)</div>
<div class="t" style="left:736.98px;top:360.36px;font-size:8.56px;color:#4670b0;-webkit-text-stroke:0.1px #4670b0;transform:scaleX(0.9903);transform-origin:right;">(625)</div>
<div class="t" style="left:792.33px;top:360.36px;font-size:8.56px;color:#4670b0;-webkit-text-stroke:0.1px #4670b0;transform:scaleX(0.9903);transform-origin:right;">(625)</div>
<div class="t" style="left:847.68px;top:360.36px;font-size:8.56px;color:#4670b0;-webkit-text-stroke:0.1px #4670b0;transform:scaleX(0.9903);transform-origin:right;">(625)</div>
<div class="t" style="left:903.03px;top:360.36px;font-size:8.56px;color:#4670b0;-webkit-text-stroke:0.1px #4670b0;transform:scaleX(0.9903);transform-origin:right;">(625)</div>
<div class="t" style="left:958.38px;top:360.36px;font-size:8.56px;color:#4670b0;-webkit-text-stroke:0.1px #4670b0;transform:scaleX(0.9903);transform-origin:right;">(625)</div>
<div class="t" style="left:68.8px;top:372.85px;font-size:8.56px;color:#5582bd;-webkit-text-stroke:0.1px #5582bd;transform:scaleX(0.9860);transform-origin:left;">Interest Paid</div>
<div class="t" style="left:277.52px;top:372.85px;font-size:8.56px;color:#52709e;-webkit-text-stroke:0.1px #52709e;transform:scaleX(0.9895);transform-origin:right;">(290,000)</div>
<div class="t" style="left:332.87px;top:372.85px;font-size:8.56px;color:#52709e;-webkit-text-stroke:0.1px #52709e;transform:scaleX(0.9895);transform-origin:right;">(286,636)</div>
<div class="t" style="left:388.22px;top:372.85px;font-size:8.56px;color:#52709e;-webkit-text-stroke:0.1px #52709e;transform:scaleX(0.9895);transform-origin:right;">(283,273)</div>
<div class="t" style="left:443.57px;top:372.85px;font-size:8.56px;color:#52709e;-webkit-text-stroke:0.1px #52709e;transform:scaleX(0.9895);transform-origin:right;">(279,909)</div>
<div class="t" style="left:498.92px;top:372.85px;font-size:8.56px;color:#52709e;-webkit-text-stroke:0.1px #52709e;transform:scaleX(0.9895);transform-origin:right;">(276,546)</div>
<div class="t" style="left:554.27px;top:372.85px;font-size:8.56px;color:#52709e;-webkit-text-stroke:0.1px #52709e;transform:scaleX(0.9895);transform-origin:right;">(273,182)</div>
<div class="t" style="left:609.62px;top:372.85px;font-size:8.56px;color:#52709e;-webkit-text-stroke:0.1px #52709e;transform:scaleX(0.9895);transform-origin:right;">(269,818)</div>
<div class="t" style="left:664.97px;top:372.85px;font-size:8.56px;color:#52709e;-webkit-text-stroke:0.1px #52709e;transform:scaleX(0.9895);transform-origin:right;">(266,455)</div>
<div class="t" style="left:720.32px;top:372.85px;font-size:8.56px;color:#52709e;-webkit-text-stroke:0.1px #52709e;transform:scaleX(0.9895);transform-origin:right;">(263,091)</div>
<div class="t" style="left:775.67px;top:372.85px;font-size:8.56px;color:#52709e;-webkit-text-stroke:0.1px #52709e;transform:scaleX(0.9895);transform-origin:right;">(259,728)</div>
<div class="t" style="left:831.02px;top:372.85px;font-size:8.56px;color:#52709e;-webkit-text-stroke:0.1px #52709e;transform:scaleX(0.9895);transform-origin:right;">(256,364)</div>
<div class="t" style="left:886.37px;top:372.85px;font-size:8.56px;color:#52709e;-webkit-text-stroke:0.1px #52709e;transform:scaleX(0.9895);transform-origin:right;">(253,000)</div>
<div class="t" style="left:941.72px;top:372.85px;font-size:8.56px;color:#52709e;-webkit-text-stroke:0.1px #52709e;transform:scaleX(0.9895);transform-origin:right;">(249,637)</div>
<div class="t" style="left:68.8px;top:385.34px;font-size:8.56px;color:#5582bd;-webkit-text-stroke:0.1px #5582bd;transform:scaleX(0.9639);transform-origin:left;">Corporate Tax Paid</div>
<div class="t" style="left:277.52px;top:385.34px;font-size:8.56px;color:#52709e;-webkit-text-stroke:0.1px #52709e;transform:scaleX(0.9895);transform-origin:right;">(588,218)</div>
<div class="t" style="left:332.87px;top:385.34px;font-size:8.56px;color:#52709e;-webkit-text-stroke:0.1px #52709e;transform:scaleX(0.9895);transform-origin:right;">(609,852)</div>
<div class="t" style="left:388.22px;top:385.34px;font-size:8.56px;color:#52709e;-webkit-text-stroke:0.1px #52709e;transform:scaleX(0.9895);transform-origin:right;">(598,242)</div>
<div class="t" style="left:443.57px;top:385.34px;font-size:8.56px;color:#52709e;-webkit-text-stroke:0.1px #52709e;transform:scaleX(0.9895);transform-origin:right;">(610,692)</div>
<div class="t" style="left:498.92px;top:385.34px;font-size:8.56px;color:#52709e;-webkit-text-stroke:0.1px #52709e;transform:scaleX(0.9895);transform-origin:right;">(614,899)</div>
<div class="t" style="left:554.27px;top:385.34px;font-size:8.56px;color:#52709e;-webkit-text-stroke:0.1px #52709e;transform:scaleX(0.9895);transform-origin:right;">(622,714)</div>
<div class="t" style="left:609.62px;top:385.34px;font-size:8.56px;color:#52709e;-webkit-text-stroke:0.1px #52709e;transform:scaleX(0.9895);transform-origin:right;">(617,200)</div>
<div class="t" style="left:664.97px;top:385.34px;font-size:8.56px;color:#52709e;-webkit-text-stroke:0.1px #52709e;transform:scaleX(0.9895);transform-origin:right;">(640,888)</div>
<div class="t" style="left:720.32px;top:385.34px;font-size:8.56px;color:#52709e;-webkit-text-stroke:0.1px #52709e;transform:scaleX(0.9895);transform-origin:right;">(645,559)</div>
<div class="t" style="left:775.67px;top:385.34px;font-size:8.56px;color:#52709e;-webkit-text-stroke:0.1px #52709e;transform:scaleX(0.9895);transform-origin:right;">(657,083)</div>
<div class="t" style="left:831.02px;top:385.34px;font-size:8.56px;color:#52709e;-webkit-text-stroke:0.1px #52709e;transform:scaleX(0.9895);transform-origin:right;">(664,422)</div>
<div class="t" style="left:886.37px;top:385.34px;font-size:8.56px;color:#52709e;-webkit-text-stroke:0.1px #52709e;transform:scaleX(0.9895);transform-origin:right;">(659,885)</div>
<div class="t" style="left:941.72px;top:385.34px;font-size:8.56px;color:#52709e;-webkit-text-stroke:0.1px #52709e;transform:scaleX(0.9895);transform-origin:right;">(410,176)</div>
<div class="t" style="left:68.8px;top:397.83px;font-size:8.56px;color:#fff;-webkit-text-stroke:0.1px #fff;transform:scaleX(0.8948);transform-origin:left;">CASH INFLOW</div>
<div class="t" style="left:273.29px;top:397.83px;font-size:8.56px;color:#fff;-webkit-text-stroke:0.1px #fff;transform:scaleX(0.9888);transform-origin:right;">2,998,214</div>
<div class="t" style="left:328.64px;top:397.83px;font-size:8.56px;color:#fff;-webkit-text-stroke:0.1px #fff;transform:scaleX(0.9888);transform-origin:right;">3,106,885</div>
<div class="t" style="left:383.99px;top:397.83px;font-size:8.56px;color:#fff;-webkit-text-stroke:0.1px #fff;transform:scaleX(0.9888);transform-origin:right;">3,048,834</div>
<div class="t" style="left:439.34px;top:397.83px;font-size:8.56px;color:#fff;-webkit-text-stroke:0.1px #fff;transform:scaleX(0.9888);transform-origin:right;">3,147,584</div>
<div class="t" style="left:494.69px;top:397.83px;font-size:8.56px;color:#fff;-webkit-text-stroke:0.1px #fff;transform:scaleX(0.9888);transform-origin:right;">3,168,622</div>
<div class="t" style="left:550.04px;top:397.83px;font-size:8.56px;color:#fff;-webkit-text-stroke:0.1px #fff;transform:scaleX(0.9888);transform-origin:right;">3,207,697</div>
<div class="t" style="left:605.39px;top:397.83px;font-size:8.56px;color:#fff;-webkit-text-stroke:0.1px #fff;transform:scaleX(0.9888);transform-origin:right;">3,180,127</div>
<div class="t" style="left:660.74px;top:397.83px;font-size:8.56px;color:#fff;-webkit-text-stroke:0.1px #fff;transform:scaleX(0.9888);transform-origin:right;">3,256,317</div>
<div class="t" style="left:716.09px;top:397.83px;font-size:8.56px;color:#fff;-webkit-text-stroke:0.1px #fff;transform:scaleX(0.9888);transform-origin:right;">3,279,672</div>
<div class="t" style="left:771.44px;top:397.83px;font-size:8.56px;color:#fff;-webkit-text-stroke:0.1px #fff;transform:scaleX(0.9888);transform-origin:right;">3,337,292</div>
<div class="t" style="left:826.79px;top:397.83px;font-size:8.56px;color:#fff;-webkit-text-stroke:0.1px #fff;transform:scaleX(0.9888);transform-origin:right;">3,356,987</div>
<div class="t" style="left:882.14px;top:397.83px;font-size:8.56px;color:#fff;-webkit-text-stroke:0.1px #fff;transform:scaleX(0.9888);transform-origin:right;">3,334,302</div>
<div class="t" style="left:937.49px;top:397.83px;font-size:8.56px;color:#fff;-webkit-text-stroke:0.1px #fff;transform:scaleX(0.9888);transform-origin:right;">1,179,628</div>
<div class="t" style="left:68.8px;top:410.32px;font-size:8.56px;color:#dfe7f5;-webkit-text-stroke:0.1px #dfe7f5;transform:scaleX(0.8919);transform-origin:left;">CASH OUTFLOW</div>
<div class="t" style="left:277.52px;top:410.32px;font-size:8.56px;color:#dfe7f5;-webkit-text-stroke:0.1px #dfe7f5;transform:scaleX(0.9895);transform-origin:right;">(878,843)</div>
<div class="t" style="left:333.51px;top:410.32px;font-size:8.56px;color:#dfe7f5;-webkit-text-stroke:0.1px #dfe7f5;transform:scaleX(1.0070);transform-origin:right;">(897,113)</div>
<div class="t" style="left:388.22px;top:410.32px;font-size:8.56px;color:#dfe7f5;-webkit-text-stroke:0.1px #dfe7f5;transform:scaleX(0.9895);transform-origin:right;">(882,140)</div>
<div class="t" style="left:443.57px;top:410.32px;font-size:8.56px;color:#dfe7f5;-webkit-text-stroke:0.1px #dfe7f5;transform:scaleX(0.9895);transform-origin:right;">(891,226)</div>
<div class="t" style="left:498.92px;top:410.32px;font-size:8.56px;color:#dfe7f5;-webkit-text-stroke:0.1px #dfe7f5;transform:scaleX(0.9895);transform-origin:right;">(892,070)</div>
<div class="t" style="left:554.27px;top:410.32px;font-size:8.56px;color:#dfe7f5;-webkit-text-stroke:0.1px #dfe7f5;transform:scaleX(0.9895);transform-origin:right;">(896,521)</div>
<div class="t" style="left:609.62px;top:410.32px;font-size:8.56px;color:#dfe7f5;-webkit-text-stroke:0.1px #dfe7f5;transform:scaleX(0.9895);transform-origin:right;">(887,644)</div>
<div class="t" style="left:664.97px;top:410.32px;font-size:8.56px;color:#dfe7f5;-webkit-text-stroke:0.1px #dfe7f5;transform:scaleX(0.9895);transform-origin:right;">(907,968)</div>
<div class="t" style="left:720.32px;top:410.32px;font-size:8.56px;color:#dfe7f5;-webkit-text-stroke:0.1px #dfe7f5;transform:scaleX(0.9895);transform-origin:right;">(909,276)</div>
<div class="t" style="left:775.67px;top:410.32px;font-size:8.56px;color:#dfe7f5;-webkit-text-stroke:0.1px #dfe7f5;transform:scaleX(0.9895);transform-origin:right;">(917,436)</div>
<div class="t" style="left:831.66px;top:410.32px;font-size:8.56px;color:#dfe7f5;-webkit-text-stroke:0.1px #dfe7f5;transform:scaleX(1.0070);transform-origin:right;">(921,411)</div>
<div class="t" style="left:887.01px;top:410.32px;font-size:8.56px;color:#dfe7f5;-webkit-text-stroke:0.1px #dfe7f5;transform:scaleX(1.0070);transform-origin:right;">(913,511)</div>
<div class="t" style="left:941.72px;top:410.32px;font-size:8.56px;color:#dfe7f5;-webkit-text-stroke:0.1px #dfe7f5;transform:scaleX(0.9895);transform-origin:right;">(660,438)</div>
<div class="t" style="left:62.4px;top:422.81px;font-size:8.56px;color:#4a72ae;-webkit-text-stroke:0.1px #4a72ae;transform:scaleX(0.9930);transform-origin:left;">Net Cash Flow from Operating Activities</div>
<div class="t" style="left:273.92px;top:422.81px;font-size:8.56px;color:#43608f;-webkit-text-stroke:0.1px #43608f;transform:scaleX(1.0056);transform-origin:right;">2,119,371</div>
<div class="t" style="left:328.64px;top:422.81px;font-size:8.56px;color:#43608f;-webkit-text-stroke:0.1px #43608f;transform:scaleX(0.9888);transform-origin:right;">2,209,772</div>
<div class="t" style="left:383.99px;top:422.81px;font-size:8.56px;color:#43608f;-webkit-text-stroke:0.1px #43608f;transform:scaleX(0.9888);transform-origin:right;">2,166,694</div>
<div class="t" style="left:439.34px;top:422.81px;font-size:8.56px;color:#43608f;-webkit-text-stroke:0.1px #43608f;transform:scaleX(0.9888);transform-origin:right;">2,256,358</div>
<div class="t" style="left:494.69px;top:422.81px;font-size:8.56px;color:#43608f;-webkit-text-stroke:0.1px #43608f;transform:scaleX(0.9888);transform-origin:right;">2,276,552</div>
<div class="t" style="left:550.67px;top:422.81px;font-size:8.56px;color:#43608f;-webkit-text-stroke:0.1px #43608f;transform:scaleX(1.0056);transform-origin:right;">2,311,176</div>
<div class="t" style="left:605.39px;top:422.81px;font-size:8.56px;color:#43608f;-webkit-text-stroke:0.1px #43608f;transform:scaleX(0.9888);transform-origin:right;">2,292,483</div>
<div class="t" style="left:660.74px;top:422.81px;font-size:8.56px;color:#43608f;-webkit-text-stroke:0.1px #43608f;transform:scaleX(0.9888);transform-origin:right;">2,348,349</div>
<div class="t" style="left:716.09px;top:422.81px;font-size:8.56px;color:#43608f;-webkit-text-stroke:0.1px #43608f;transform:scaleX(0.9888);transform-origin:right;">2,370,396</div>
<div class="t" style="left:771.44px;top:422.81px;font-size:8.56px;color:#43608f;-webkit-text-stroke:0.1px #43608f;transform:scaleX(0.9888);transform-origin:right;">2,419,856</div>
<div class="t" style="left:826.79px;top:422.81px;font-size:8.56px;color:#43608f;-webkit-text-stroke:0.1px #43608f;transform:scaleX(0.9888);transform-origin:right;">2,435,576</div>
<div class="t" style="left:882.14px;top:422.81px;font-size:8.56px;color:#43608f;-webkit-text-stroke:0.1px #43608f;transform:scaleX(0.9888);transform-origin:right;">2,420,791</div>
<div class="t" style="left:944.62px;top:422.81px;font-size:8.56px;color:#43608f;-webkit-text-stroke:0.1px #43608f;transform:scaleX(0.9895);transform-origin:right;">519,190</div>
<div class="t" style="left:62.4px;top:435.3px;font-size:8.56px;color:#4a72ae;-webkit-text-stroke:0.1px #4a72ae;transform:scaleX(0.9978);transform-origin:left;">Net Cash Flow from Operating Activities (Indirect)</div>
<div class="t" style="left:273.92px;top:435.3px;font-size:8.56px;color:#43608f;-webkit-text-stroke:0.1px #43608f;transform:scaleX(1.0056);transform-origin:right;">2,117,660</div>
<div class="t" style="left:328.64px;top:435.3px;font-size:8.56px;color:#43608f;-webkit-text-stroke:0.1px #43608f;transform:scaleX(0.9888);transform-origin:right;">2,208,061</div>
<div class="t" style="left:383.99px;top:435.3px;font-size:8.56px;color:#43608f;-webkit-text-stroke:0.1px #43608f;transform:scaleX(0.9888);transform-origin:right;">2,164,983</div>
<div class="t" style="left:439.34px;top:435.3px;font-size:8.56px;color:#43608f;-webkit-text-stroke:0.1px #43608f;transform:scaleX(0.9888);transform-origin:right;">2,254,647</div>
<div class="t" style="left:494.69px;top:435.3px;font-size:8.56px;color:#43608f;-webkit-text-stroke:0.1px #43608f;transform:scaleX(0.9888);transform-origin:right;">2,274,841</div>
<div class="t" style="left:550.04px;top:435.3px;font-size:8.56px;color:#43608f;-webkit-text-stroke:0.1px #43608f;transform:scaleX(0.9888);transform-origin:right;">2,309,465</div>
<div class="t" style="left:605.39px;top:435.3px;font-size:8.56px;color:#43608f;-webkit-text-stroke:0.1px #43608f;transform:scaleX(0.9888);transform-origin:right;">2,290,772</div>
<div class="t" style="left:660.74px;top:435.3px;font-size:8.56px;color:#43608f;-webkit-text-stroke:0.1px #43608f;transform:scaleX(0.9888);transform-origin:right;">2,346,638</div>
<div class="t" style="left:716.09px;top:435.3px;font-size:8.56px;color:#43608f;-webkit-text-stroke:0.1px #43608f;transform:scaleX(0.9888);transform-origin:right;">2,368,685</div>
<div class="t" style="left:771.44px;top:435.3px;font-size:8.56px;color:#43608f;-webkit-text-stroke:0.1px #43608f;transform:scaleX(0.9888);transform-origin:right;">2,418,145</div>
<div class="t" style="left:826.79px;top:435.3px;font-size:8.56px;color:#43608f;-webkit-text-stroke:0.1px #43608f;transform:scaleX(0.9888);transform-origin:right;">2,433,865</div>
<div class="t" style="left:882.14px;top:435.3px;font-size:8.56px;color:#43608f;-webkit-text-stroke:0.1px #43608f;transform:scaleX(0.9888);transform-origin:right;">2,419,080</div>
<div class="t" style="left:944.62px;top:435.3px;font-size:8.56px;color:#43608f;-webkit-text-stroke:0.1px #43608f;transform:scaleX(0.9895);transform-origin:right;">517,740</div>
<div class="t" style="left:62.4px;top:447.79px;font-size:8.56px;color:#2b5c9a;font-weight:bold;-webkit-text-stroke:0.1px #2b5c9a;transform:scaleX(0.9296);transform-origin:left;">Cash Flow from Investing Activities</div>
<div class="t" style="left:68.8px;top:460.28px;font-size:8.56px;color:#4a72ae;-webkit-text-stroke:0.1px #4a72ae;transform:scaleX(0.9698);transform-origin:left;">Fixed Assets Capital Expenditure</div>
<div class="t" style="left:273.29px;top:460.28px;font-size:8.56px;color:#4470b0;-webkit-text-stroke:0.1px #4470b0;transform:scaleX(0.9888);transform-origin:right;">1,450,000</div>
<div class="t" style="left:362.98px;top:459.98px;font-size:8.56px;color:#b4b4b4;transform:scaleX(0.9993);transform-origin:center;">-</div>
<div class="t" style="left:418.33px;top:459.98px;font-size:8.56px;color:#b4b4b4;transform:scaleX(0.9993);transform-origin:center;">-</div>
<div class="t" style="left:473.68px;top:459.98px;font-size:8.56px;color:#b4b4b4;transform:scaleX(0.9993);transform-origin:center;">-</div>
<div class="t" style="left:529.03px;top:459.98px;font-size:8.56px;color:#b4b4b4;transform:scaleX(0.9993);transform-origin:center;">-</div>
<div class="t" style="left:584.38px;top:459.98px;font-size:8.56px;color:#b4b4b4;transform:scaleX(0.9993);transform-origin:center;">-</div>
<div class="t" style="left:639.73px;top:459.98px;font-size:8.56px;color:#b4b4b4;transform:scaleX(0.9993);transform-origin:center;">-</div>
<div class="t" style="left:695.08px;top:459.98px;font-size:8.56px;color:#b4b4b4;transform:scaleX(0.9993);transform-origin:center;">-</div>
<div class="t" style="left:750.43px;top:459.98px;font-size:8.56px;color:#b4b4b4;transform:scaleX(0.9993);transform-origin:center;">-</div>
<div class="t" style="left:805.78px;top:459.98px;font-size:8.56px;color:#b4b4b4;transform:scaleX(0.9993);transform-origin:center;">-</div>
<div class="t" style="left:861.13px;top:459.98px;font-size:8.56px;color:#b4b4b4;transform:scaleX(0.9993);transform-origin:center;">-</div>
<div class="t" style="left:916.48px;top:459.98px;font-size:8.56px;color:#b4b4b4;transform:scaleX(0.9993);transform-origin:center;">-</div>
<div class="t" style="left:971.83px;top:459.98px;font-size:8.56px;color:#b4b4b4;transform:scaleX(0.9993);transform-origin:center;">-</div>
<div class="t" style="left:81px;top:472.77px;font-size:8.56px;color:#4274b8;-webkit-text-stroke:0.1px #4274b8;transform:scaleX(0.9833);transform-origin:left;">Placeholder 1</div>
<div class="t" style="left:362.98px;top:472.47px;font-size:8.56px;color:#b4b4b4;transform:scaleX(0.9993);transform-origin:center;">-</div>
<div class="t" style="left:418.33px;top:472.47px;font-size:8.56px;color:#b4b4b4;transform:scaleX(0.9993);transform-origin:center;">-</div>
<div class="t" style="left:473.68px;top:472.47px;font-size:8.56px;color:#b4b4b4;transform:scaleX(0.9993);transform-origin:center;">-</div>
<div class="t" style="left:529.03px;top:472.47px;font-size:8.56px;color:#b4b4b4;transform:scaleX(0.9993);transform-origin:center;">-</div>
<div class="t" style="left:584.38px;top:472.47px;font-size:8.56px;color:#b4b4b4;transform:scaleX(0.9993);transform-origin:center;">-</div>
<div class="t" style="left:639.73px;top:472.47px;font-size:8.56px;color:#b4b4b4;transform:scaleX(0.9993);transform-origin:center;">-</div>
<div class="t" style="left:695.08px;top:472.47px;font-size:8.56px;color:#b4b4b4;transform:scaleX(0.9993);transform-origin:center;">-</div>
<div class="t" style="left:750.43px;top:472.47px;font-size:8.56px;color:#b4b4b4;transform:scaleX(0.9993);transform-origin:center;">-</div>
<div class="t" style="left:805.78px;top:472.47px;font-size:8.56px;color:#b4b4b4;transform:scaleX(0.9993);transform-origin:center;">-</div>
<div class="t" style="left:861.13px;top:472.47px;font-size:8.56px;color:#b4b4b4;transform:scaleX(0.9993);transform-origin:center;">-</div>
<div class="t" style="left:916.48px;top:472.47px;font-size:8.56px;color:#b4b4b4;transform:scaleX(0.9993);transform-origin:center;">-</div>
<div class="t" style="left:971.83px;top:472.47px;font-size:8.56px;color:#b4b4b4;transform:scaleX(0.9993);transform-origin:center;">-</div>
<div class="t" style="left:68.8px;top:485.26px;font-size:8.56px;color:#4a72ae;-webkit-text-stroke:0.1px #4a72ae;transform:scaleX(0.9900);transform-origin:left;">Net Cash Flow from Investing Activities</div>
<div class="t" style="left:273.29px;top:485.26px;font-size:8.56px;color:#4470b0;-webkit-text-stroke:0.1px #4470b0;transform:scaleX(0.9888);transform-origin:right;">1,450,000</div>
<div class="t" style="left:362.98px;top:484.96px;font-size:8.56px;color:#b4b4b4;transform:scaleX(0.9993);transform-origin:center;">-</div>
<div class="t" style="left:418.33px;top:484.96px;font-size:8.56px;color:#b4b4b4;transform:scaleX(0.9993);transform-origin:center;">-</div>
<div class="t" style="left:473.68px;top:484.96px;font-size:8.56px;color:#b4b4b4;transform:scaleX(0.9993);transform-origin:center;">-</div>
<div class="t" style="left:529.03px;top:484.96px;font-size:8.56px;color:#b4b4b4;transform:scaleX(0.9993);transform-origin:center;">-</div>
<div class="t" style="left:584.38px;top:484.96px;font-size:8.56px;color:#b4b4b4;transform:scaleX(0.9993);transform-origin:center;">-</div>
<div class="t" style="left:639.73px;top:484.96px;font-size:8.56px;color:#b4b4b4;transform:scaleX(0.9993);transform-origin:center;">-</div>
<div class="t" style="left:695.08px;top:484.96px;font-size:8.56px;color:#b4b4b4;transform:scaleX(0.9993);transform-origin:center;">-</div>
<div class="t" style="left:750.43px;top:484.96px;font-size:8.56px;color:#b4b4b4;transform:scaleX(0.9993);transform-origin:center;">-</div>
<div class="t" style="left:805.78px;top:484.96px;font-size:8.56px;color:#b4b4b4;transform:scaleX(0.9993);transform-origin:center;">-</div>
<div class="t" style="left:861.13px;top:484.96px;font-size:8.56px;color:#b4b4b4;transform:scaleX(0.9993);transform-origin:center;">-</div>
<div class="t" style="left:916.48px;top:484.96px;font-size:8.56px;color:#b4b4b4;transform:scaleX(0.9993);transform-origin:center;">-</div>
<div class="t" style="left:971.83px;top:484.96px;font-size:8.56px;color:#b4b4b4;transform:scaleX(0.9993);transform-origin:center;">-</div>
<div class="t" style="left:62.4px;top:497.75px;font-size:8.56px;color:#2b5c9a;font-weight:bold;-webkit-text-stroke:0.1px #2b5c9a;transform:scaleX(0.9247);transform-origin:left;">Cash Flow from Financing Activities</div>
<div class="t" style="left:362.98px;top:497.45px;font-size:8.56px;color:#b4b4b4;transform:scaleX(0.9993);transform-origin:center;">-</div>
<div class="t" style="left:418.33px;top:497.45px;font-size:8.56px;color:#b4b4b4;transform:scaleX(0.9993);transform-origin:center;">-</div>
<div class="t" style="left:473.68px;top:497.45px;font-size:8.56px;color:#b4b4b4;transform:scaleX(0.9993);transform-origin:center;">-</div>
<div class="t" style="left:529.03px;top:497.45px;font-size:8.56px;color:#b4b4b4;transform:scaleX(0.9993);transform-origin:center;">-</div>
<div class="t" style="left:584.38px;top:497.45px;font-size:8.56px;color:#b4b4b4;transform:scaleX(0.9993);transform-origin:center;">-</div>
<div class="t" style="left:639.73px;top:497.45px;font-size:8.56px;color:#b4b4b4;transform:scaleX(0.9993);transform-origin:center;">-</div>
<div class="t" style="left:695.08px;top:497.45px;font-size:8.56px;color:#b4b4b4;transform:scaleX(0.9993);transform-origin:center;">-</div>
<div class="t" style="left:750.43px;top:497.45px;font-size:8.56px;color:#b4b4b4;transform:scaleX(0.9993);transform-origin:center;">-</div>
<div class="t" style="left:805.78px;top:497.45px;font-size:8.56px;color:#b4b4b4;transform:scaleX(0.9993);transform-origin:center;">-</div>
<div class="t" style="left:861.13px;top:497.45px;font-size:8.56px;color:#b4b4b4;transform:scaleX(0.9993);transform-origin:center;">-</div>
<div class="t" style="left:916.48px;top:497.45px;font-size:8.56px;color:#b4b4b4;transform:scaleX(0.9993);transform-origin:center;">-</div>
<div class="t" style="left:971.83px;top:497.45px;font-size:8.56px;color:#b4b4b4;transform:scaleX(0.9993);transform-origin:center;">-</div>
<div class="t" style="left:68.8px;top:510.24px;font-size:8.56px;color:#4a72ae;-webkit-text-stroke:0.1px #4a72ae;transform:scaleX(0.9988);transform-origin:left;">Debt Drawdowns</div>
<div class="t" style="left:270.39px;top:510.24px;font-size:8.56px;color:#4470b0;-webkit-text-stroke:0.1px #4470b0;transform:scaleX(0.9889);transform-origin:right;">(1,450,000)</div>
<div class="t" style="left:362.98px;top:509.94px;font-size:8.56px;color:#b4b4b4;transform:scaleX(0.9993);transform-origin:center;">-</div>
<div class="t" style="left:418.33px;top:509.94px;font-size:8.56px;color:#b4b4b4;transform:scaleX(0.9993);transform-origin:center;">-</div>
<div class="t" style="left:473.68px;top:509.94px;font-size:8.56px;color:#b4b4b4;transform:scaleX(0.9993);transform-origin:center;">-</div>
<div class="t" style="left:529.03px;top:509.94px;font-size:8.56px;color:#b4b4b4;transform:scaleX(0.9993);transform-origin:center;">-</div>
<div class="t" style="left:584.38px;top:509.94px;font-size:8.56px;color:#b4b4b4;transform:scaleX(0.9993);transform-origin:center;">-</div>
<div class="t" style="left:639.73px;top:509.94px;font-size:8.56px;color:#b4b4b4;transform:scaleX(0.9993);transform-origin:center;">-</div>
<div class="t" style="left:695.08px;top:509.94px;font-size:8.56px;color:#b4b4b4;transform:scaleX(0.9993);transform-origin:center;">-</div>
<div class="t" style="left:750.43px;top:509.94px;font-size:8.56px;color:#b4b4b4;transform:scaleX(0.9993);transform-origin:center;">-</div>
<div class="t" style="left:805.78px;top:509.94px;font-size:8.56px;color:#b4b4b4;transform:scaleX(0.9993);transform-origin:center;">-</div>
<div class="t" style="left:861.13px;top:509.94px;font-size:8.56px;color:#b4b4b4;transform:scaleX(0.9993);transform-origin:center;">-</div>
<div class="t" style="left:916.48px;top:509.94px;font-size:8.56px;color:#b4b4b4;transform:scaleX(0.9993);transform-origin:center;">-</div>
<div class="t" style="left:971.83px;top:509.94px;font-size:8.56px;color:#b4b4b4;transform:scaleX(0.9993);transform-origin:center;">-</div>
<div class="t" style="left:81px;top:522.73px;font-size:8.56px;color:#4274b8;-webkit-text-stroke:0.1px #4274b8;transform:scaleX(0.9833);transform-origin:left;">Placeholder 1</div>
<div class="t" style="left:362.98px;top:522.43px;font-size:8.56px;color:#b4b4b4;transform:scaleX(0.9993);transform-origin:center;">-</div>
<div class="t" style="left:418.33px;top:522.43px;font-size:8.56px;color:#b4b4b4;transform:scaleX(0.9993);transform-origin:center;">-</div>
<div class="t" style="left:473.68px;top:522.43px;font-size:8.56px;color:#b4b4b4;transform:scaleX(0.9993);transform-origin:center;">-</div>
<div class="t" style="left:529.03px;top:522.43px;font-size:8.56px;color:#b4b4b4;transform:scaleX(0.9993);transform-origin:center;">-</div>
<div class="t" style="left:584.38px;top:522.43px;font-size:8.56px;color:#b4b4b4;transform:scaleX(0.9993);transform-origin:center;">-</div>
<div class="t" style="left:639.73px;top:522.43px;font-size:8.56px;color:#b4b4b4;transform:scaleX(0.9993);transform-origin:center;">-</div>
<div class="t" style="left:695.08px;top:522.43px;font-size:8.56px;color:#b4b4b4;transform:scaleX(0.9993);transform-origin:center;">-</div>
<div class="t" style="left:750.43px;top:522.43px;font-size:8.56px;color:#b4b4b4;transform:scaleX(0.9993);transform-origin:center;">-</div>
<div class="t" style="left:805.78px;top:522.43px;font-size:8.56px;color:#b4b4b4;transform:scaleX(0.9993);transform-origin:center;">-</div>
<div class="t" style="left:861.13px;top:522.43px;font-size:8.56px;color:#b4b4b4;transform:scaleX(0.9993);transform-origin:center;">-</div>
<div class="t" style="left:916.48px;top:522.43px;font-size:8.56px;color:#b4b4b4;transform:scaleX(0.9993);transform-origin:center;">-</div>
<div class="t" style="left:971.83px;top:522.43px;font-size:8.56px;color:#b4b4b4;transform:scaleX(0.9993);transform-origin:center;">-</div>
<div class="t" style="left:81px;top:535.22px;font-size:8.56px;color:#4274b8;-webkit-text-stroke:0.1px #4274b8;transform:scaleX(0.9833);transform-origin:left;">Placeholder 2</div>
<div class="t" style="left:362.98px;top:534.92px;font-size:8.56px;color:#b4b4b4;transform:scaleX(0.9993);transform-origin:center;">-</div>
<div class="t" style="left:418.33px;top:534.92px;font-size:8.56px;color:#b4b4b4;transform:scaleX(0.9993);transform-origin:center;">-</div>
<div class="t" style="left:473.68px;top:534.92px;font-size:8.56px;color:#b4b4b4;transform:scaleX(0.9993);transform-origin:center;">-</div>
<div class="t" style="left:529.03px;top:534.92px;font-size:8.56px;color:#b4b4b4;transform:scaleX(0.9993);transform-origin:center;">-</div>
<div class="t" style="left:584.38px;top:534.92px;font-size:8.56px;color:#b4b4b4;transform:scaleX(0.9993);transform-origin:center;">-</div>
<div class="t" style="left:639.73px;top:534.92px;font-size:8.56px;color:#b4b4b4;transform:scaleX(0.9993);transform-origin:center;">-</div>
<div class="t" style="left:695.08px;top:534.92px;font-size:8.56px;color:#b4b4b4;transform:scaleX(0.9993);transform-origin:center;">-</div>
<div class="t" style="left:750.43px;top:534.92px;font-size:8.56px;color:#b4b4b4;transform:scaleX(0.9993);transform-origin:center;">-</div>
<div class="t" style="left:805.78px;top:534.92px;font-size:8.56px;color:#b4b4b4;transform:scaleX(0.9993);transform-origin:center;">-</div>
<div class="t" style="left:861.13px;top:534.92px;font-size:8.56px;color:#b4b4b4;transform:scaleX(0.9993);transform-origin:center;">-</div>
<div class="t" style="left:916.48px;top:534.92px;font-size:8.56px;color:#b4b4b4;transform:scaleX(0.9993);transform-origin:center;">-</div>
<div class="t" style="left:971.83px;top:534.92px;font-size:8.56px;color:#b4b4b4;transform:scaleX(0.9993);transform-origin:center;">-</div>
<div class="t" style="left:81px;top:547.71px;font-size:8.56px;color:#4274b8;-webkit-text-stroke:0.1px #4274b8;transform:scaleX(0.9833);transform-origin:left;">Placeholder 3</div>
<div class="t" style="left:362.98px;top:547.41px;font-size:8.56px;color:#b4b4b4;transform:scaleX(0.9993);transform-origin:center;">-</div>
<div class="t" style="left:418.33px;top:547.41px;font-size:8.56px;color:#b4b4b4;transform:scaleX(0.9993);transform-origin:center;">-</div>
<div class="t" style="left:473.68px;top:547.41px;font-size:8.56px;color:#b4b4b4;transform:scaleX(0.9993);transform-origin:center;">-</div>
<div class="t" style="left:529.03px;top:547.41px;font-size:8.56px;color:#b4b4b4;transform:scaleX(0.9993);transform-origin:center;">-</div>
<div class="t" style="left:584.38px;top:547.41px;font-size:8.56px;color:#b4b4b4;transform:scaleX(0.9993);transform-origin:center;">-</div>
<div class="t" style="left:639.73px;top:547.41px;font-size:8.56px;color:#b4b4b4;transform:scaleX(0.9993);transform-origin:center;">-</div>
<div class="t" style="left:695.08px;top:547.41px;font-size:8.56px;color:#b4b4b4;transform:scaleX(0.9993);transform-origin:center;">-</div>
<div class="t" style="left:750.43px;top:547.41px;font-size:8.56px;color:#b4b4b4;transform:scaleX(0.9993);transform-origin:center;">-</div>
<div class="t" style="left:805.78px;top:547.41px;font-size:8.56px;color:#b4b4b4;transform:scaleX(0.9993);transform-origin:center;">-</div>
<div class="t" style="left:861.13px;top:547.41px;font-size:8.56px;color:#b4b4b4;transform:scaleX(0.9993);transform-origin:center;">-</div>
<div class="t" style="left:916.48px;top:547.41px;font-size:8.56px;color:#b4b4b4;transform:scaleX(0.9993);transform-origin:center;">-</div>
<div class="t" style="left:971.83px;top:547.41px;font-size:8.56px;color:#b4b4b4;transform:scaleX(0.9993);transform-origin:center;">-</div>
<div class="t" style="left:68.8px;top:560.6px;font-size:8.56px;color:#4a72ae;-webkit-text-stroke:0.1px #4a72ae;transform:scaleX(0.9771);transform-origin:left;">Debt Repayments</div>
<div class="t" style="left:332.87px;top:560.6px;font-size:8.56px;color:#4470b0;-webkit-text-stroke:0.1px #4470b0;transform:scaleX(0.9895);transform-origin:right;">(125,000)</div>
<div class="t" style="left:388.22px;top:560.6px;font-size:8.56px;color:#4470b0;-webkit-text-stroke:0.1px #4470b0;transform:scaleX(0.9895);transform-origin:right;">(125,000)</div>
<div class="t" style="left:443.57px;top:560.6px;font-size:8.56px;color:#4470b0;-webkit-text-stroke:0.1px #4470b0;transform:scaleX(0.9895);transform-origin:right;">(125,000)</div>
<div class="t" style="left:498.92px;top:560.6px;font-size:8.56px;color:#4470b0;-webkit-text-stroke:0.1px #4470b0;transform:scaleX(0.9895);transform-origin:right;">(125,000)</div>
<div class="t" style="left:554.27px;top:560.6px;font-size:8.56px;color:#4470b0;-webkit-text-stroke:0.1px #4470b0;transform:scaleX(0.9895);transform-origin:right;">(125,000)</div>
<div class="t" style="left:609.62px;top:560.6px;font-size:8.56px;color:#4470b0;-webkit-text-stroke:0.1px #4470b0;transform:scaleX(0.9895);transform-origin:right;">(125,000)</div>
<div class="t" style="left:664.97px;top:560.6px;font-size:8.56px;color:#4470b0;-webkit-text-stroke:0.1px #4470b0;transform:scaleX(0.9895);transform-origin:right;">(125,000)</div>
<div class="t" style="left:720.32px;top:560.6px;font-size:8.56px;color:#4470b0;-webkit-text-stroke:0.1px #4470b0;transform:scaleX(0.9895);transform-origin:right;">(125,000)</div>
<div class="t" style="left:775.67px;top:560.6px;font-size:8.56px;color:#4470b0;-webkit-text-stroke:0.1px #4470b0;transform:scaleX(0.9895);transform-origin:right;">(125,000)</div>
<div class="t" style="left:831.02px;top:560.6px;font-size:8.56px;color:#4470b0;-webkit-text-stroke:0.1px #4470b0;transform:scaleX(0.9895);transform-origin:right;">(125,000)</div>
<div class="t" style="left:886.37px;top:560.6px;font-size:8.56px;color:#4470b0;-webkit-text-stroke:0.1px #4470b0;transform:scaleX(0.9895);transform-origin:right;">(125,000)</div>
<div class="t" style="left:941.72px;top:560.6px;font-size:8.56px;color:#4470b0;-webkit-text-stroke:0.1px #4470b0;transform:scaleX(0.9895);transform-origin:right;">(125,000)</div>
<div class="a" style="left:987.8px;top:51.3px;width:12.5px;height:507px;background:#f7f7f7;"></div>
<svg class="a" style="left:990px;top:53.5px" width="9" height="6"><polygon points="4.5,0.5 8.5,5 0.5,5" fill="#6a6a6a"/></svg>
<div class="a" style="left:991px;top:62.2px;width:6px;height:282.5px;background:#6e6e6e;border-radius:3px"></div>
<svg class="a" style="left:990px;top:550px" width="9" height="6"><polygon points="0.5,0.5 8.5,0.5 4.5,5" fill="#6a6a6a"/></svg>
</div>
<div class="a" style="left:0px;top:0px;width:1000px;height:30.6px;background:#137a45;"></div>
<div class="a" style="left:0px;top:0px;width:1000px;height:2.8px;background:#1b7f4b;"></div>
<div class="a" style="left:0px;top:3.2px;width:1000px;height:1.2px;background:#0f7241;"></div>
<div class="a" style="left:0px;top:25.2px;width:1000px;height:1px;background:#0c7843;"></div>
<div class="a" style="left:0px;top:26.2px;width:1000px;height:2.8px;background:#197848;"></div>
<div class="a" style="left:0px;top:29px;width:1000px;height:1.5px;background:#0f6536;"></div>
<div class="a" style="left:0px;top:30.5px;width:1000px;height:1px;background:#c5e8d2;"></div>
<div class="t" style="left:117.2px;top:16.25px;font-size:8.8px;color:#dff2e5;-webkit-text-stroke:0.12px #dff2e5;transform:scaleX(0.8783);transform-origin:left;">Construction Equipment Financial Model With DCF.xlsx</div>
<div class="a" style="left:310.3px;top:15.6px;width:3.2px;height:0.9px;background:#d8ebe0;"></div>
<div class="t" style="left:317.6px;top:16.25px;font-size:8.8px;color:#dff2e5;-webkit-text-stroke:0.12px #dff2e5;transform:scaleX(0.8086);transform-origin:left;">Excel</div>
<div class="a" style="left:385.5px;top:5.5px;width:240px;height:20px;background:#d6e7dc;border-radius:2px"></div>
<div class="a" style="left:385.5px;top:5.5px;width:240px;height:20px;background:transparent;border:0.8px solid #b9d6c3;border-radius:2px"></div>
<svg class="a" style="left:392px;top:8px" width="14" height="14"><circle cx="8.3" cy="5.6" r="3.6" fill="none" stroke="#4b5a50" stroke-width="1.1"/><line x1="5.6" y1="8.3" x2="2" y2="11.9" stroke="#4b5a50" stroke-width="1.2"/></svg>
<div class="t" style="left:413px;top:15.51px;font-size:9.2px;color:#4f5852;-webkit-text-stroke:0.1px #4f5852;transform:scaleX(0.8919);transform-origin:left;">Search</div>
<div class="a" style="left:883.5px;top:7.6px;width:16px;height:16px;border-radius:50%;background:#a01caf"></div>
<div class="t" style="left:887.38px;top:16.29px;font-size:5.5px;color:#f5d0f5;transform:scaleX(0.8485);transform-origin:center;">RG</div>
<div class="a" style="left:917.5px;top:15.2px;width:9px;height:1px;background:#d9ede0;"></div>
<svg class="a" style="left:949px;top:11.5px" width="9" height="9"><rect x="0.6" y="2.2" width="6" height="6" rx="0.8" fill="none" stroke="#d9ede0" stroke-width="1"/><path d="M2.4 2.2 V1 Q2.4 0.6 3 0.6 H7.6 Q8.2 0.6 8.2 1.2 V5.8 Q8.2 6.4 7.6 6.4 H6.6" fill="none" stroke="#d9ede0" stroke-width="0.9"/></svg>
<svg class="a" style="left:980.5px;top:11.5px" width="9" height="9"><path d="M0.6 0.6 L8.4 8.4 M8.4 0.6 L0.6 8.4" stroke="#d9ede0" stroke-width="1"/></svg>
<svg class="a" style="left:9.5px;top:9.3px" width="12" height="14"><rect x="2.5" y="0.6" width="9" height="12.8" rx="1.6" fill="#e3f3e8"/><rect x="0.4" y="3.2" width="6.6" height="7.4" rx="0.8" fill="#e3f3e8" stroke="#137a45" stroke-width="0.8"/><path d="M2 5 L5.4 9 M5.4 5 L2 9" stroke="#137a45" stroke-width="1.1"/><path d="M8 3.5 V10.5" stroke="#137a45" stroke-width="0.8"/></svg>
<svg class="a" style="left:30.5px;top:9px" width="12" height="13"><rect x="0.7" y="0.7" width="10.6" height="11.6" fill="none" stroke="#e3f1e8" stroke-width="1.2"/><rect x="3" y="0.7" width="6" height="4.3" fill="none" stroke="#e3f1e8" stroke-width="1"/><rect x="2.8" y="7.2" width="6.4" height="5" fill="none" stroke="#e3f1e8" stroke-width="1"/></svg>
<svg class="a" style="left:47px;top:8.5px" width="45" height="14"><path d="M3.5 4.5 Q9 0.5 12.5 5.5 Q12.5 11 7.5 11.5" fill="none" stroke="#3f8a5e" stroke-width="1.3"/><path d="M2.5 1.5 V5.5 H6.5" fill="none" stroke="#3f8a5e" stroke-width="1.3"/><line x1="15" y1="6.5" x2="18" y2="6.5" stroke="#3f8a5e" stroke-width="1"/><path d="M38.5 4.5 Q33 0.5 29.5 5.5 Q29.5 11 34.5 11.5" fill="none" stroke="#3f8a5e" stroke-width="1.3"/><path d="M39.5 1.5 V5.5 H35.5" fill="none" stroke="#3f8a5e" stroke-width="1.3"/><line x1="41" y1="6.5" x2="44" y2="6.5" stroke="#3f8a5e" stroke-width="1"/></svg>
<svg class="a" style="left:99px;top:10px" width="10" height="10"><line x1="2" y1="2.5" x2="8" y2="2.5" stroke="#d6ebdd" stroke-width="0.9"/><path d="M1.5 5 H8.5 L5 8.5 Z" fill="#d6ebdd"/></svg>
<div class="a" style="left:0px;top:31.5px;width:1000px;height:19.8px;background:#e8eaef;"></div>
<div class="a" style="left:0px;top:48.8px;width:1000px;height:2.5px;background:#e4e5e8;"></div>
<div class="t" style="left:13.7px;top:41.82px;font-size:8.3px;color:#262626;-webkit-text-stroke:0.1px #262626;transform:scaleX(0.9197);transform-origin:left;">File</div>
<div class="t" style="left:44.9px;top:41.82px;font-size:8.3px;color:#262626;-webkit-text-stroke:0.1px #262626;transform:scaleX(1.0253);transform-origin:left;">Home</div>
<div class="t" style="left:80.6px;top:41.82px;font-size:8.3px;color:#262626;-webkit-text-stroke:0.1px #262626;transform:scaleX(1.0646);transform-origin:left;">Insert</div>
<div class="t" style="left:116.3px;top:41.82px;font-size:8.3px;color:#262626;-webkit-text-stroke:0.1px #262626;transform:scaleX(1.0171);transform-origin:left;">Draw</div>
<div class="t" style="left:149.6px;top:41.82px;font-size:8.3px;color:#262626;-webkit-text-stroke:0.1px #262626;transform:scaleX(1.0405);transform-origin:left;">Page Layout</div>
<div class="t" style="left:211.6px;top:41.82px;font-size:8.3px;color:#262626;-webkit-text-stroke:0.1px #262626;transform:scaleX(1.0408);transform-origin:left;">Formulas</div>
<div class="t" style="left:260.2px;top:41.82px;font-size:8.3px;color:#262626;-webkit-text-stroke:0.1px #262626;transform:scaleX(1.0267);transform-origin:left;">Data</div>
<div class="t" style="left:292.1px;top:41.82px;font-size:8.3px;color:#262626;-webkit-text-stroke:0.1px #262626;transform:scaleX(1.0105);transform-origin:left;">Review</div>
<div class="t" style="left:332.8px;top:41.82px;font-size:8.3px;color:#262626;-webkit-text-stroke:0.1px #262626;transform:scaleX(1.0482);transform-origin:left;">View</div>
<div class="t" style="left:364.7px;top:41.82px;font-size:8.3px;color:#262626;-webkit-text-stroke:0.1px #262626;transform:scaleX(1.0467);transform-origin:left;">Developer</div>
<div class="t" style="left:417.5px;top:41.82px;font-size:8.3px;color:#262626;-webkit-text-stroke:0.1px #262626;transform:scaleX(1.0955);transform-origin:left;">Help</div>
<div class="t" style="left:449.4px;top:41.82px;font-size:8.3px;color:#262626;-webkit-text-stroke:0.1px #262626;transform:scaleX(1.0342);transform-origin:left;">Power Pivot</div>
<div class="a" style="left:946px;top:34px;width:46px;height:14.5px;background:#157a42;border-radius:2.5px"></div>
<div class="t" style="left:960.5px;top:41.7px;font-size:7.8px;color:#ffffff;transform:scaleX(0.9609);transform-origin:left;">Share</div>
<svg class="a" style="left:949px;top:36.5px" width="10" height="10"><path d="M1 4.5 V9 H8.5 V6" fill="none" stroke="#e6f2ea" stroke-width="0.9"/><path d="M4 6.5 Q4.5 3 8.5 3 M6.8 1.2 L8.8 3 L6.8 4.8" fill="none" stroke="#e6f2ea" stroke-width="0.9"/></svg>
<svg class="a" style="left:984px;top:39.5px" width="6" height="5"><path d="M0.5 1 L3 3.5 L5.5 1" fill="none" stroke="#e6f2ea" stroke-width="0.9"/></svg>
<div class="a" style="left:0px;top:558.3px;width:1000px;height:18.7px;background:#e7e8ea;"></div>
<div class="a" style="left:74.2px;top:560px;width:91.5px;height:16.2px;background:#faf7cf;"></div>
<div class="t" style="left:79.5px;top:569.97px;font-size:10.2px;color:#262626;-webkit-text-stroke:0.1px #262626;transform:scaleX(0.8677);transform-origin:left;">Product Sales 35-39</div>
<div class="a" style="left:172px;top:560px;width:93px;height:16.2px;background:#faf7cf;"></div>
<div class="t" style="left:179px;top:569.97px;font-size:10.2px;color:#262626;-webkit-text-stroke:0.1px #262626;transform:scaleX(0.8548);transform-origin:left;">Product Sales 40-44</div>
<div class="a" style="left:271px;top:560px;width:72px;height:16.2px;background:#faf7cf;"></div>
<div class="t" style="left:277px;top:569.97px;font-size:10.2px;color:#262626;-webkit-text-stroke:0.1px #262626;transform:scaleX(0.8817);transform-origin:left;">2026 Accounts</div>
<div class="a" style="left:345px;top:560px;width:103px;height:16.2px;background:#dfe1e6;"></div>
<div class="t" style="left:354px;top:569.97px;font-size:10.2px;color:#262626;-webkit-text-stroke:0.1px #262626;transform:scaleX(0.8671);transform-origin:left;">2026 MRR Dashboard</div>
<div class="a" style="left:453px;top:560px;width:44px;height:16.2px;background:#faf7cf;"></div>
<div class="t" style="left:460px;top:569.97px;font-size:10.2px;color:#262626;-webkit-text-stroke:0.1px #262626;transform:scaleX(0.8418);transform-origin:left;">IS 2026</div>
<div class="a" style="left:501px;top:560px;width:42.5px;height:16.2px;background:#f6f8f0;"></div>
<div class="t" style="left:506px;top:569.97px;font-size:10.2px;color:#1e3a1e;font-weight:bold;transform:scaleX(0.8282);transform-origin:left;">CF 2026</div>
<div class="a" style="left:543.5px;top:560px;width:52.5px;height:16.2px;background:#dfe1e6;"></div>
<div class="t" style="left:555.7px;top:569.97px;font-size:10.2px;color:#262626;-webkit-text-stroke:0.1px #262626;transform:scaleX(0.8152);transform-origin:left;">BS 2026</div>
<div class="a" style="left:598px;top:560px;width:124px;height:16.2px;background:#dfe1e6;"></div>
<div class="t" style="left:606.8px;top:569.97px;font-size:10.2px;color:#262626;-webkit-text-stroke:0.1px #262626;transform:scaleX(0.8601);transform-origin:left;">Statements Summary 2026</div>
<div class="a" style="left:727px;top:560px;width:60.2px;height:16.2px;background:#faf7cf;"></div>
<div class="t" style="left:732.6px;top:569.97px;font-size:10.2px;color:#262626;-webkit-text-stroke:0.1px #262626;transform:scaleX(0.8053);transform-origin:left;">CAPEX 2026</div>
<div class="a" style="left:792.8px;top:560px;width:54.6px;height:16.2px;background:#faf7cf;"></div>
<div class="t" style="left:798.4px;top:569.97px;font-size:10.2px;color:#262626;-webkit-text-stroke:0.1px #262626;transform:scaleX(0.8224);transform-origin:left;">OPEX 2026</div>
<div class="a" style="left:855.9px;top:560px;width:25.1px;height:16.2px;background:#faf7cf;"></div>
<div class="t" style="left:860px;top:569.97px;font-size:10.2px;color:#262626;-webkit-text-stroke:0.1px #262626;transform:scaleX(0.8682);transform-origin:left;">2027</div>
<div class="a" style="left:506px;top:574.2px;width:32.5px;height:1.3px;background:#2a8a52;"></div>
<div class="a" style="left:881px;top:559px;width:110px;height:17.5px;background:#e7e8ea;"></div>
<svg class="a" style="left:16px;top:564.5px" width="7" height="9"><path d="M5 1 L1.8 4.5 L5 8" fill="none" stroke="#9a9a9a" stroke-width="1"/></svg>
<div class="a" style="left:32.5px;top:561.5px;width:13px;height:13px;border-radius:50%;background:#eeeeef"></div><svg class="a" style="left:36px;top:564.5px" width="7" height="9"><path d="M2 1 L5.2 4.5 L2 8" fill="none" stroke="#777" stroke-width="1"/></svg>
<svg class="a" style="left:56px;top:566.5px" width="10" height="4"><circle cx="1.5" cy="2" r="1.1" fill="#333"/><circle cx="5" cy="2" r="1.1" fill="#333"/><circle cx="8.5" cy="2" r="1.1" fill="#333"/></svg>
<svg class="a" style="left:888.5px;top:566.5px" width="8" height="4"><circle cx="1.2" cy="2" r="1" fill="#333"/><circle cx="4" cy="2" r="1" fill="#333"/><circle cx="6.8" cy="2" r="1" fill="#333"/></svg>
<svg class="a" style="left:906px;top:563.5px" width="11" height="11"><path d="M5.5 0.5 V10.5 M0.5 5.5 H10.5" stroke="#333" stroke-width="1"/></svg>
<svg class="a" style="left:930px;top:563.5px" width="4" height="11"><circle cx="2" cy="2" r="0.9" fill="#555"/><circle cx="2" cy="5.5" r="0.9" fill="#555"/><circle cx="2" cy="9" r="0.9" fill="#555"/></svg>
<svg class="a" style="left:944px;top:563.5px" width="44" height="11"><polygon points="7,2 7,9 2.5,5.5" fill="#555"/><rect x="10" y="2.8" width="18" height="5.4" rx="2.7" fill="#555"/><polygon points="37,2 37,9 41.5,5.5" fill="#555"/></svg>
<div class="a" style="left:0px;top:576.5px;width:1000px;height:1.2px;background:#d8d8d8;"></div>
<div class="a" style="left:0px;top:577.7px;width:1000px;height:14.3px;background:#f3f3f3;"></div>
<div class="t" style="left:8px;top:587.03px;font-size:8px;color:#444;-webkit-text-stroke:0.1px #444;transform:scaleX(0.7611);transform-origin:left;">Ready</div>
<svg class="a" style="left:39px;top:581.5px" width="10" height="9"><rect x="0.5" y="0.5" width="9" height="8" fill="none" stroke="#555" stroke-width="0.9"/><rect x="0.5" y="0.5" width="9" height="2.5" fill="#666"/><circle cx="6" cy="6" r="1.6" fill="#444"/></svg>
<svg class="a" style="left:60.5px;top:580.5px" width="9" height="11"><path d="M0.8 3 H8.2 M2.5 3 L3 10 H6 L6.5 3 M3.5 1.2 H5.5" fill="none" stroke="#444" stroke-width="0.9"/><path d="M4 6 L7 9" stroke="#444" stroke-width="0.8"/></svg>
<div class="t" style="left:72px;top:586.97px;font-size:7.6px;color:#222;font-weight:bold;transform:scaleX(0.8721);transform-origin:left;">Accessibility: Investigate</div>
<div class="a" style="left:806.8px;top:578px;width:24px;height:14px;background:#e0e0e0;"></div>
<svg class="a" style="left:814.5px;top:582px" width="10" height="9"><rect x="0.5" y="0.5" width="9" height="8" fill="none" stroke="#505050" stroke-width="0.9"/><path d="M0.5 3.2 H9.5 M0.5 5.8 H9.5 M3.5 0.5 V8.5 M6.5 0.5 V8.5" stroke="#505050" stroke-width="0.7"/></svg>
<svg class="a" style="left:839.5px;top:582px" width="10" height="9"><rect x="0.5" y="0.5" width="9" height="8" fill="none" stroke="#505050" stroke-width="0.9"/><path d="M0.5 2.5 H9.5 M2.5 2.5 V8.5 M7.5 2.5 V8.5" stroke="#505050" stroke-width="0.7"/></svg>
<svg class="a" style="left:866.5px;top:582px" width="10" height="9"><rect x="0.5" y="0.5" width="9" height="8" fill="none" stroke="#505050" stroke-width="0.9"/><path d="M0.5 5.5 H5.5 V8.5 M5.5 0.5 V5.5" fill="none" stroke="#505050" stroke-width="0.7"/></svg>
<div class="a" style="left:888.5px;top:586.8px;width:5px;height:0.9px;background:#555;"></div>
<div class="a" style="left:896px;top:586.8px;width:68px;height:0.8px;background:#9a9a9a;"></div>
<div class="a" style="left:927.5px;top:583px;width:2.6px;height:7.5px;background:#555;border-radius:1px"></div>
<svg class="a" style="left:963.5px;top:584px" width="6" height="6"><path d="M3 0.5 V5.5 M0.5 3 H5.5" stroke="#555" stroke-width="0.8"/></svg>
<div class="t" style="left:979px;top:587.16px;font-size:8.2px;color:#444;-webkit-text-stroke:0.1px #444;transform:scaleX(0.7391);transform-origin:left;">100%</div>
</body></html>
